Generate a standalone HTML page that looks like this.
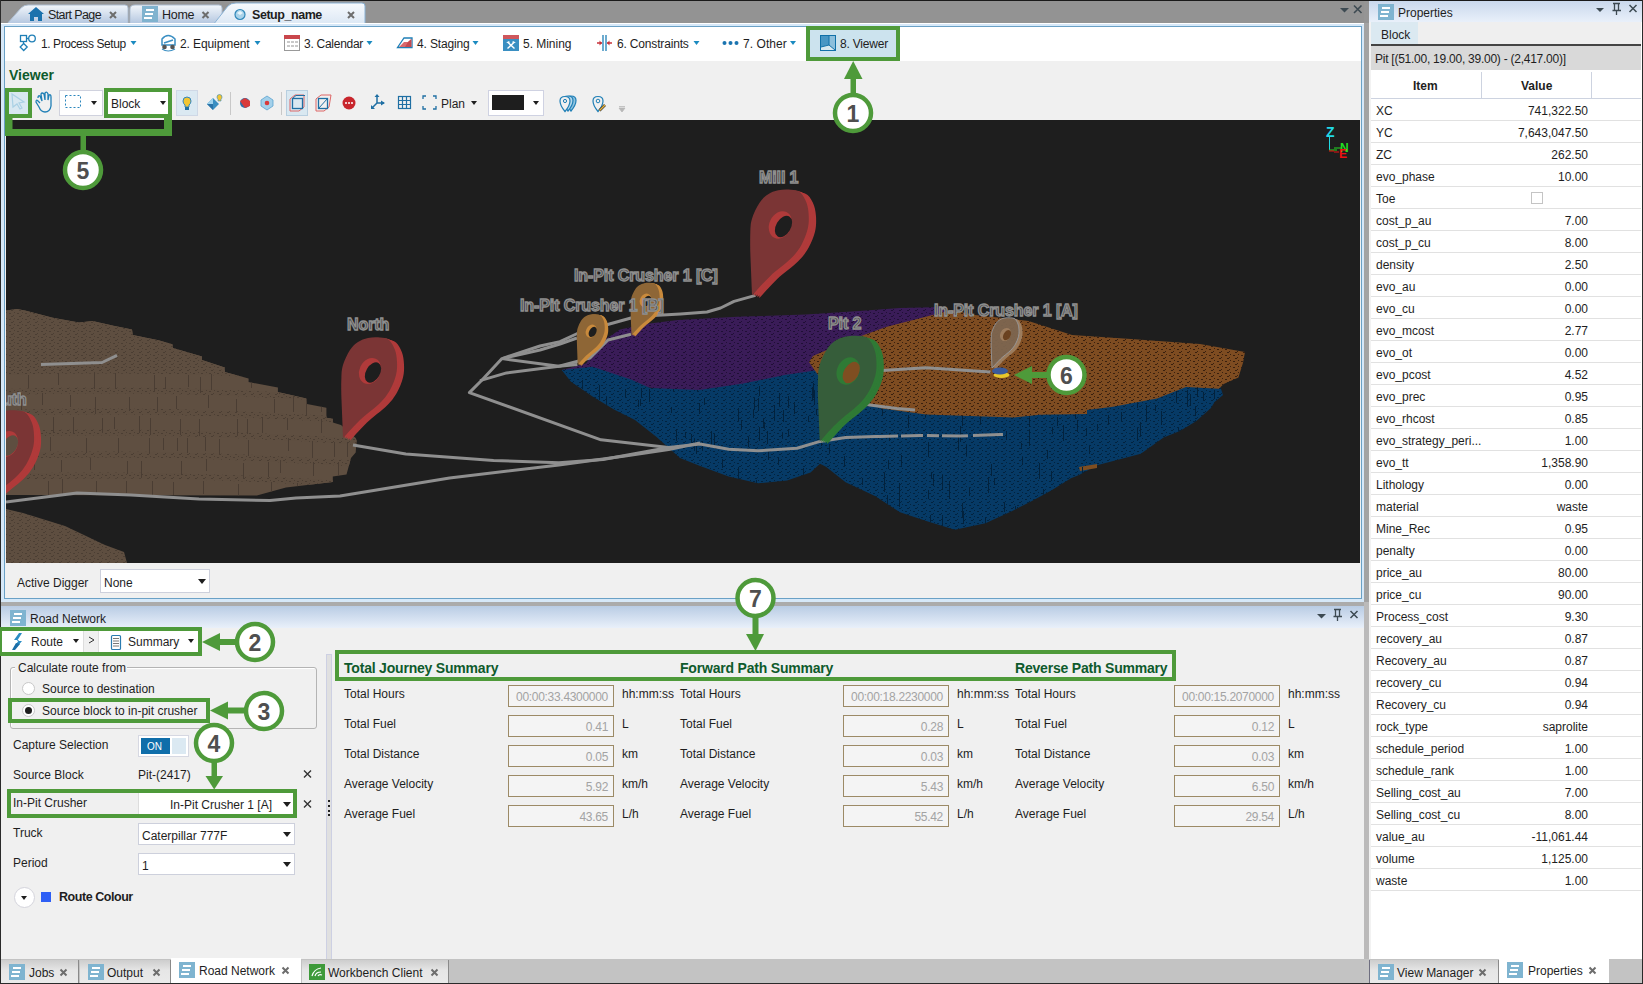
<!DOCTYPE html>
<html><head><meta charset="utf-8">
<style>
*{box-sizing:border-box}
html,body{margin:0;padding:0}
body{width:1643px;height:984px;position:relative;overflow:hidden;background:#f0f0f0;font-family:"Liberation Sans",sans-serif;font-size:12px;color:#1e1e1e}
.a{position:absolute}
.t{position:absolute;white-space:nowrap;line-height:16px}
.combo{position:absolute;background:#fff;border:1px solid #cdd0dc}
.arr{position:absolute;width:0;height:0;border-left:4px solid transparent;border-right:4px solid transparent;border-top:5px solid #1e1e1e}
.sarr{position:absolute;width:0;height:0;border-left:4px solid transparent;border-right:4px solid transparent;border-top:4px solid #1b8ac0}
.gb{position:absolute;border:4px solid #4e9a3a}
.docico{position:absolute;background:#7fb4d0;width:16px;height:16px}
.docico:before{content:"";position:absolute;left:4px;top:3px;width:8px;height:2px;background:#fff;box-shadow:-1px 4px 0 #fff,-2px 8px 0 #fff}
.xx{position:absolute;color:#6a6a6a;font-size:12px;font-weight:700;line-height:12px}
.prow{position:absolute;left:1371px;width:270px;height:22px;border-bottom:1px solid #e3e3e3}
.prow span{position:absolute;top:4px;white-space:nowrap}
.prow .k{left:5px}
.prow .v{right:54px}
.tb{position:absolute;width:106px;height:22px;background:#f4f4f4;border:1px solid #9c8a66;color:#a3a3a3;text-align:right;padding-right:5px;line-height:22px;font-size:12px;letter-spacing:-0.3px}
</style></head><body>

<!-- window frame -->
<div class="a" style="left:0;top:0;width:1643px;height:1px;background:#1a1a1a"></div>
<div class="a" style="left:0;top:1px;width:1369px;height:22px;background:#939393"></div>
<div class="a" style="left:0;top:0;width:1px;height:984px;background:#2a2a2a"></div>

<!-- doc tabs -->
<svg class="a" style="left:0;top:0" width="400" height="27">
<defs>
<linearGradient id="tabg" x1="0" y1="0" x2="0" y2="1"><stop offset="0" stop-color="#f2f6fb"/><stop offset="1" stop-color="#b3c6df"/></linearGradient>
<linearGradient id="tabga" x1="0" y1="0" x2="0" y2="1"><stop offset="0" stop-color="#f7fafd"/><stop offset="1" stop-color="#dbe7f4"/></linearGradient>
</defs>
<path d="M7,24 L21,8 Q24,5 28,5 L125,5 Q128,5 128,8 L128,24 Z" fill="url(#tabg)" stroke="#aebfd3" stroke-width="1"/>
<path d="M130,24 L130,9 Q130,5 135,5 L219,5 Q222,5 222,8 L222,24 Z" fill="url(#tabg)" stroke="#aebfd3" stroke-width="1"/>
<path d="M213,25 L228,6 Q231,3 236,3 L362,3 Q365,3 365,6 L365,25 Z" fill="url(#tabga)" stroke="#8bb3d6" stroke-width="1"/>
<!-- house -->
<path d="M28,14 L36,7 L44,14 L42,14 L42,21 L38,21 L38,17 L34,17 L34,21 L30,21 L30,14 Z" fill="#1b72ad"/>
<!-- home doc icon -->
<rect x="142" y="6" width="16" height="16" fill="#80b3cf"/>
<rect x="146" y="9" width="8" height="2" fill="#fff"/><rect x="145" y="13" width="8" height="2" fill="#fff"/><rect x="144" y="17" width="8" height="2" fill="#fff"/>
<!-- setup icon -->
<circle cx="240" cy="14.5" r="5" fill="#a9d3ea" stroke="#2f87b9" stroke-width="1.2"/>
<path d="M237,13 L240,11 L243,13 L240,15 Z" fill="#e8f5fb"/>
<!-- close x -->
<g stroke="#6d6d6d" stroke-width="2">
<path d="M110,12 L116,18 M116,12 L110,18"/>
<path d="M202.5,12 L208.5,18 M208.5,12 L202.5,18"/>
<path d="M348,12 L354,18 M354,12 L348,18"/>
</g>
</svg>
<div class="t" style="left:48px;top:7px;font-size:12.5px;letter-spacing:-0.6px">Start Page</div>
<div class="t" style="left:162px;top:7px;font-size:12.5px;letter-spacing:-0.3px">Home</div>
<div class="t" style="left:252px;top:7px;font-size:12.5px;font-weight:700;letter-spacing:-0.45px">Setup_name</div>
<!-- doc top-right icons -->
<svg class="a" style="left:1336px;top:4px" width="30" height="12">
<path d="M4,4 L13,4 L8.5,8.5 Z" fill="#3d4a52"/>
<path d="M18,1.5 L25.5,9 M25.5,1.5 L18,9" stroke="#3d4a52" stroke-width="1.6"/>
</svg>

<!-- doc area frame -->
<div class="a" style="left:1px;top:23px;width:1363px;height:579px;background:#d6e8f8;border-top:1px solid #fff"></div>
<div class="a" style="left:4px;top:26px;width:1358px;height:573px;border:1px solid #6aa1c6;background:#f0f0f0"></div>
<!-- ribbon -->
<div class="a" style="left:5px;top:27px;width:1356px;height:34px;background:#fff"></div>

<!-- ribbon items -->
<svg class="a" style="left:0;top:27px;overflow:visible" width="1000" height="34">
<g fill="none" stroke="#1f7fb6" stroke-width="1.3">
<rect x="20.5" y="8.5" width="6" height="6"/><circle cx="32" cy="11.5" r="3.3"/><path d="M26.5,11.5 L28.7,11.5 M23.5,14.5 L23.5,16.5 M23.7,16.5 L27.2,20 L23.7,23.5 L20.2,20 Z"/>
</g>
<!-- equipment -->
<g>
<path d="M162,12 Q168,5 175,12 L175,18 L162,18 Z" fill="none" stroke="#3b8fc3" stroke-width="1.5"/>
<path d="M164,16 L173,13" stroke="#3b8fc3" stroke-width="1.5"/>
<circle cx="164.5" cy="20" r="2.3" fill="#555"/><circle cx="172.5" cy="20" r="2.3" fill="#555"/>
<path d="M162,22 Q168,26 175,22" fill="none" stroke="#3b8fc3" stroke-width="1.2"/>
</g>
<!-- calendar -->
<rect x="284.5" y="8.5" width="15" height="15" fill="#fff" stroke="#999" stroke-width="1"/>
<rect x="284" y="8" width="16" height="4" fill="#c9464c"/>
<g fill="#c9c9c9"><rect x="287" y="14" width="3" height="2"/><rect x="291" y="14" width="3" height="2"/><rect x="295" y="14" width="3" height="2"/><rect x="287" y="18" width="3" height="2"/><rect x="291" y="18" width="3" height="2"/><rect x="295" y="18" width="3" height="2"/></g>
<!-- staging -->
<path d="M397.5,20.5 L404,11 L412,11 L412,20.5 Z" fill="#fff" stroke="#1f7fb6" stroke-width="1.3"/>
<path d="M399,20 L404,15 L408,15 L411.3,12 L411.3,20 Z" fill="#d9686d"/><path d="M405,20 L408,15 L411.3,12 L411.3,20 Z" fill="#c44a50"/>
<!-- mining -->
<rect x="503" y="8" width="16" height="16" fill="#3a8fc2"/><rect x="503" y="8" width="16" height="4" fill="#cf575c"/>
<path d="M507.5,21.5 L514.5,15 M514.5,21.5 L507.5,15" stroke="#fff" stroke-width="1.4"/><path d="M506,16 L509,14 L510,15.5 Z M516,16 L513,14 L512,15.5 Z" fill="#fff"/>
<!-- constraints -->
<path d="M603,8 L603,24 M606,8 L606,24" stroke="#1f7fb6" stroke-width="1.3"/>
<path d="M597,16 L602,16 M607,16 L612,16" stroke="#c8323a" stroke-width="1.3"/>
<path d="M599.5,13.5 L602,16 L599.5,18.5 Z M609.5,13.5 L607,16 L609.5,18.5 Z" fill="#c8323a"/>
<!-- other dots -->
<circle cx="724.5" cy="16" r="2" fill="#1a74b0"/><circle cx="730.5" cy="16" r="2" fill="#1a74b0"/><circle cx="736.5" cy="16" r="2" fill="#1a74b0"/>
<!-- dropdown arrows -->
<g fill="#1b8ac0">
<path d="M130.5,14 L136.5,14 L133.5,18 Z"/><path d="M254.5,14 L260.5,14 L257.5,18 Z"/><path d="M366.5,14 L372.5,14 L369.5,18 Z"/>
<path d="M472.5,14 L478.5,14 L475.5,18 Z"/><path d="M693.5,14 L699.5,14 L696.5,18 Z"/><path d="M790,14 L796,14 L793,18 Z"/>
</g>
<!-- viewer box -->
<rect x="806" y="-1" width="94" height="35" fill="#4e9a3a"/>
<rect x="810" y="3" width="86" height="27" fill="#cce3ee"/>
<path d="M821,9 L829,9 L829,18 L821,20 Z" fill="#4896c4"/><path d="M829,9 L835,9 L835,23 L829,18 Z" fill="#8cbfdc"/><path d="M821,20 L829,18 L835,23 L821,23 Z" fill="#d8e8f0"/>
<rect x="820.5" y="8.5" width="15" height="15" fill="none" stroke="#1070a8" stroke-width="1"/>
<path d="M829,9 L829,18 L821,20 M829,18 L835,23" stroke="#1070a8" stroke-width="1" fill="none"/>
</svg>
<div class="t" style="left:41px;top:36px;letter-spacing:-0.42px">1. Process Setup</div>
<div class="t" style="left:180px;top:36px;letter-spacing:-0.1px">2. Equipment</div>
<div class="t" style="left:304px;top:36px;letter-spacing:-0.27px">3. Calendar</div>
<div class="t" style="left:417px;top:36px;letter-spacing:-0.15px">4. Staging</div>
<div class="t" style="left:523px;top:36px;letter-spacing:-0.03px">5. Mining</div>
<div class="t" style="left:617px;top:36px;letter-spacing:-0.17px">6. Constraints</div>
<div class="t" style="left:743px;top:36px;letter-spacing:0.07px">7. Other</div>
<div class="t" style="left:840px;top:36px;letter-spacing:-0.2px">8. Viewer</div>

<!-- viewer toolbar -->
<div class="t" style="left:9px;top:67px;font-size:14px;font-weight:700;color:#0e5a2c;line-height:16px">Viewer</div>
<svg class="a" style="left:0;top:85px" width="640" height="36">
<!-- pointer green box -->
<rect x="5" y="3" width="27" height="30" fill="#4e9a3a"/>
<rect x="9" y="7" width="19" height="22" fill="#d8e8f1"/>
<path d="M12,9 L24,17 L19,18 L22,23 L20,24 L17,19 L13,22 Z" fill="none" stroke="#a9d0e4" stroke-width="1.2"/>
<!-- hand -->
<path d="M38,13 Q38,10 40,11 L42,16 L41,9 Q42,7 44,9 L45,15 L45,8 Q47,6 48,9 L48,15 L49,10 Q51,9 51,12 L51,21 Q50,27 45,27 Q41,27 39,22 L36,17 Q36,14 38,16 L40,18" fill="none" stroke="#1f7fb6" stroke-width="1.3"/>
<!-- select dropdown -->
<rect x="59.5" y="5.5" width="43" height="25" fill="#fff" stroke="#d0d2de"/>
<rect x="65.5" y="10.5" width="15" height="12" fill="none" stroke="#2a86bd" stroke-dasharray="2,2"/>
<path d="M91,16 L97,16 L94,20 Z" fill="#1e1e1e"/>
<!-- block box -->
<rect x="104" y="3" width="68" height="30" fill="#4e9a3a"/>
<rect x="108" y="7" width="60" height="22" fill="#fff"/>
<path d="M160,16 L166,16 L163,20 Z" fill="#1e1e1e"/>
<!-- bulb -->
<rect x="176.5" y="5.5" width="21" height="25" fill="#dbe9f2" stroke="#cfd8e6"/>
<path d="M187,12 Q191,12 191,16 Q191,18.5 189,20 L189,22 L185,22 L185,20 Q183,18.5 183,16 Q183,12 187,12 Z" fill="#f3c531" stroke="#2f86bf" stroke-width="1"/>
<rect x="185" y="22" width="4" height="3" fill="#1f6fa3"/>
<!-- diamond -->
<path d="M207,19 L213,13 L219,19 L213,25 Z" fill="#3a8fc2"/><path d="M207,19 L213,13 L213,19 Z" fill="#9fd3ee"/><path d="M207,19 L213,19 L213,25 Z" fill="#2a73a8"/>
<path d="M219.5,9.5 Q222,9.5 222,12 Q222,13.5 221,14.2 L221,16 L218,16 L218,14.2 Q217,13.5 217,12 Q217,9.5 219.5,9.5 Z" fill="#f3c531" stroke="#2f86bf" stroke-width="0.6"/>
<path d="M230.5,7 L230.5,30" stroke="#c8c8c8"/>
<!-- cubes -->
<circle cx="245" cy="18" r="5" fill="#2f6fa8"/><path d="M240,16 L245,13 L250,16 L250,21 L245,23 Z" fill="#d93a3a"/>
<path d="M261,15 L267,11 L273,15 L273,21 L267,25 L261,21 Z" fill="#a3d0ea" stroke="#5aa3cf" stroke-width="0.8"/><circle cx="267" cy="18" r="2.3" fill="#d93a3a"/>
<path d="M281.5,7 L281.5,30" stroke="#c8c8c8"/>
<rect x="286.5" y="5.5" width="21" height="25" fill="#d9e8f1" stroke="#b8cfe0"/>
<path d="M290,14 L295,10 L304,10 L304,22 L299,26 L290,26 Z" fill="none" stroke="#d66" stroke-width="1"/>
<rect x="292.5" y="13.5" width="10" height="10" fill="none" stroke="#1f6fa3" stroke-width="1.3"/><path d="M292.5,13.5 L296,10.5 L305,10.5" fill="none" stroke="#1f6fa3" stroke-width="1"/>
<path d="M316,14 L321,10 L331,10 L329,22 L324,26 L316,26 Z" fill="none" stroke="#d66" stroke-width="1"/>
<rect x="318.5" y="13.5" width="9" height="10" fill="none" stroke="#1f6fa3" stroke-width="1.3"/><path d="M318.5,23.5 L327.5,13.5" stroke="#1f6fa3"/>
<!-- stop -->
<circle cx="349" cy="18" r="6.5" fill="#c8262d"/><circle cx="346" cy="18" r="1" fill="#fff"/><circle cx="349" cy="18" r="1" fill="#fff"/><circle cx="352" cy="18" r="1" fill="#fff"/>
<!-- axes -->
<path d="M377,18 L377,11 M377,18 L372,23 M377,18 L384,18" stroke="#1f6fa3" stroke-width="1.5" fill="none"/>
<path d="M374.5,12 L377,9 L379.5,12 Z M381,15.5 L385,18 L381,20.5 Z M371,20 L371,24 L375,24 Z" fill="#1f6fa3"/>
<!-- grid -->
<rect x="398.5" y="11.5" width="12" height="12" fill="none" stroke="#1f6fa3" stroke-width="1.2"/>
<path d="M402.5,11.5 L402.5,23.5 M406.5,11.5 L406.5,23.5 M398.5,15.5 L410.5,15.5 M398.5,19.5 L410.5,19.5" stroke="#1f6fa3" stroke-width="1.2"/>
<!-- corners -->
<path d="M423,14 L423,11 L426,11 M433,11 L436,11 L436,14 M436,21 L436,24 L433,24 M426,24 L423,24 L423,21" fill="none" stroke="#1f6fa3" stroke-width="1.3"/>
<path d="M471,16 L477,16 L474,20 Z" fill="#1e1e1e"/>
<!-- color combo -->
<rect x="488.5" y="5.5" width="55" height="25" fill="#fff" stroke="#cfd2e2"/>
<rect x="492" y="10" width="32" height="15" fill="#1e1e1e"/>
<path d="M533,16 L539,16 L536,20 Z" fill="#1e1e1e"/>
<!-- pins -->
<g stroke="#1f7fb6" stroke-width="1.2">
<path d="M571,26 Q566,20 566,15.5 Q566,11 571,11 Q576,11 576,15.5 Q576,20 571,26 Z" fill="#8ec3e0"/>
<path d="M568,26 Q563,20 563,15.5 Q563,11 568,11 Q573,11 573,15.5 Q573,20 568,26 Z" fill="#b5d9ec"/>
<path d="M565,26.5 Q560,20.5 560,16 Q560,11.5 565,11.5 Q570,11.5 570,16 Q570,20.5 565,26.5 Z" fill="#f0f0f0"/>
<path d="M598,26.5 Q593,20.5 593,16 Q593,11.5 598,11.5 Q603,11.5 603,16 Q603,20.5 598,26.5 Z" fill="#f0f0f0"/>
</g>
<circle cx="565" cy="16" r="1.6" fill="none" stroke="#1f7fb6" stroke-width="1"/><circle cx="598" cy="16" r="1.8" fill="none" stroke="#1f7fb6" stroke-width="1"/>
<path d="M599.5,25.5 L605,20" stroke="#333" stroke-width="2.6"/><path d="M599.5,25.5 L605,20" stroke="#e8b33a" stroke-width="1.4"/>
<path d="M619,23 L625,23 L622,27 Z M619,21.5 L625,21.5" fill="#b8b8b8" stroke="#b8b8b8" stroke-width="0.8"/>
</svg>
<div class="t" style="left:111px;top:96px">Block</div>
<div class="t" style="left:441px;top:96px">Plan</div>

<!-- active digger row -->
<div class="t" style="left:17px;top:575px">Active Digger</div>
<div class="combo" style="left:100px;top:569px;width:110px;height:24px"></div>
<div class="t" style="left:104px;top:575px">None</div>
<div class="arr" style="left:198px;top:579px"></div>

<!-- splitter -->
<div class="a" style="left:1px;top:602px;width:1363px;height:4px;background:#ababab"></div>
<div class="a" style="left:1364px;top:1px;width:5px;height:982px;background:linear-gradient(#959595 0,#959595 22px,#a3a3a3 22px,#a3a3a3 601px,#bbbaba 601px,#bbbaba 958px,#c4c4c4 958px)"></div>

<!-- road network header -->
<div class="a" style="left:1px;top:606px;width:1363px;height:22px;background:linear-gradient(#b9cce4,#e9f0fa)"></div>
<div class="docico" style="left:10px;top:610px"></div>
<div class="t" style="left:30px;top:611px">Road Network</div>
<svg class="a" style="left:1310px;top:606px" width="54" height="22">
<path d="M7,8 L16,8 L11.5,12.5 Z" fill="#3d4a52"/>
<path d="M24,3.5 L31,3.5 M25.5,4 L25.5,10 M29.5,4 L29.5,10 M23.5,10.5 L32,10.5 M27.5,11 L27.5,15" stroke="#3d4a52" stroke-width="1.3" fill="none"/>
<path d="M40.5,5 L47.5,12 M47.5,5 L40.5,12" stroke="#3d4a52" stroke-width="1.5"/>
</svg>

<!-- road network toolbar -->
<div class="a" style="left:-2px;top:627px;width:204px;height:29px;background:#4e9a3a"></div>
<div class="a" style="left:2px;top:631px;width:81px;height:21px;background:#fff"></div>
<div class="a" style="left:83px;top:631px;width:16px;height:21px;background:#f0f0f0;border-left:1px solid #ddd;border-right:1px solid #ddd"></div>
<div class="a" style="left:99px;top:631px;width:99px;height:21px;background:#fff"></div>
<svg class="a" style="left:0;top:627px" width="202" height="29">
<path d="M19,6 L14,13 L19,13 L14,20 L17,20 L22,14 L17,14 L22,6 Z" fill="#2a8cc4"/><path d="M16,16 L12,23 L15,23 L20,17 Z" fill="#1a6ea8"/>
<path d="M73,12 L79,12 L76,16 Z M188,12 L194,12 L191,16 Z" fill="#1e1e1e"/>
<path d="M89,10 L94,13 L89,16" stroke="#333" stroke-width="1" fill="none"/>
<rect x="111.5" y="8.5" width="9" height="14" rx="1" fill="#fff" stroke="#2a7bb0" stroke-width="1.2"/>
<path d="M113,11.5 L119,11.5 M113,14 L119,14 M113,16.5 L119,16.5 M113,19 L119,19" stroke="#555" stroke-width="0.8"/>
</svg>
<div class="t" style="left:31px;top:634px">Route</div>
<div class="t" style="left:128px;top:634px">Summary</div>

<!-- calculate route group -->
<div class="a" style="left:10px;top:667px;width:307px;height:62px;border:1px solid #b4b4b4;border-radius:3px;box-shadow:inset 1px 1px 0 #fff"></div>
<div class="a" style="left:15px;top:661px;width:112px;height:12px;background:#f0f0f0"></div>
<div class="t" style="left:18px;top:660px">Calculate route from</div>
<div class="a" style="left:22px;top:682px;width:13px;height:13px;border:1px solid #c8c8c8;border-radius:50%;background:#fff"></div>
<div class="t" style="left:42px;top:681px">Source to destination</div>
<div class="gb" style="left:8px;top:698px;width:202px;height:25px"></div>
<div class="a" style="left:22px;top:704px;width:13px;height:13px;border:1px solid #c8c8c8;border-radius:50%;background:#fff"></div>
<div class="a" style="left:25px;top:707px;width:7px;height:7px;border-radius:50%;background:#1e1e1e"></div>
<div class="t" style="left:42px;top:703px">Source block to in-pit crusher</div>

<!-- form rows -->
<div class="t" style="left:13px;top:737px">Capture Selection</div>
<div class="a" style="left:138px;top:735px;width:51px;height:22px;border:1px solid #d6d8e2;background:#fff"></div>
<div class="a" style="left:141px;top:738px;width:29px;height:16px;background:#0f6eaa"></div>
<div class="a" style="left:172px;top:738px;width:14px;height:16px;background:#dbe9f2"></div>
<div class="t" style="left:147px;top:739px;font-size:10px;color:#fff">ON</div>
<div class="t" style="left:13px;top:767px">Source Block</div>
<div class="t" style="left:138px;top:767px">Pit-(2417)</div>
<svg class="a" style="left:300px;top:766px" width="16" height="50">
<path d="M4,4.5 L11,11.5 M11,4.5 L4,11.5" stroke="#333" stroke-width="1.4"/>
<path d="M4,34.5 L11,41.5 M11,34.5 L4,41.5" stroke="#333" stroke-width="1.4"/>
</svg>
<div class="gb" style="left:7px;top:789px;width:290px;height:29px"></div>
<div class="t" style="left:13px;top:795px">In-Pit Crusher</div>
<div class="a" style="left:138px;top:793px;width:155px;height:21px;background:#fff;border-left:1px solid #ddd"></div>
<div class="t" style="left:170px;top:797px">In-Pit Crusher 1 [A]</div>
<div class="arr" style="left:283px;top:802px"></div>
<div class="t" style="left:13px;top:825px">Truck</div>
<div class="combo" style="left:138px;top:823px;width:157px;height:22px"></div>
<div class="t" style="left:142px;top:828px">Caterpillar 777F</div>
<div class="arr" style="left:283px;top:832px"></div>
<div class="t" style="left:13px;top:855px">Period</div>
<div class="combo" style="left:138px;top:853px;width:157px;height:22px"></div>
<div class="t" style="left:142px;top:858px">1</div>
<div class="arr" style="left:283px;top:862px"></div>
<div class="a" style="left:14px;top:887px;width:21px;height:21px;border:1px solid #d4d4dc;border-radius:50%;background:#fff"></div>
<div class="a" style="left:21px;top:896px;width:0;height:0;border-left:3.5px solid transparent;border-right:3.5px solid transparent;border-top:4px solid #1e1e1e"></div>
<div class="a" style="left:41px;top:892px;width:10px;height:10px;background:#2e5ff5"></div>
<div class="t" style="left:59px;top:889px;font-size:12.5px;font-weight:700;letter-spacing:-0.45px">Route Colour</div>

<!-- panel splitter -->
<div class="a" style="left:326px;top:654px;width:6px;height:306px;background:#e0e0e0;border:1px solid #cdd0e3;border-bottom:none"></div>
<svg class="a" style="left:327px;top:799px" width="4" height="18"><rect x="1" y="1" width="2" height="2" fill="#222"/><rect x="1" y="6" width="2" height="2" fill="#222"/><rect x="1" y="11" width="2" height="2" fill="#222"/><rect x="1" y="15" width="2" height="2" fill="#222"/></svg>

<!-- summary -->
<div class="gb" style="left:335px;top:650px;width:841px;height:31px"></div>
<div class="t" style="left:344px;top:660px;font-size:14px;font-weight:700;color:#0e5a2c;line-height:16px;letter-spacing:-0.2px">Total Journey Summary</div>
<div class="t" style="left:680px;top:660px;font-size:14px;font-weight:700;color:#0e5a2c;line-height:16px;letter-spacing:-0.2px">Forward Path Summary</div>
<div class="t" style="left:1015px;top:660px;font-size:14px;font-weight:700;color:#0e5a2c;line-height:16px;letter-spacing:-0.2px">Reverse Path Summary</div>
<div class="t" style="left:344px;top:686px">Total Hours</div>
<div class="tb" style="left:508px;top:685px;width:106px">00:00:33.4300000</div>
<div class="t" style="left:622px;top:686px">hh:mm:ss</div>
<div class="t" style="left:344px;top:716px">Total Fuel</div>
<div class="tb" style="left:508px;top:715px;width:106px">0.41</div>
<div class="t" style="left:622px;top:716px">L</div>
<div class="t" style="left:344px;top:746px">Total Distance</div>
<div class="tb" style="left:508px;top:745px;width:106px">0.05</div>
<div class="t" style="left:622px;top:746px">km</div>
<div class="t" style="left:344px;top:776px">Average Velocity</div>
<div class="tb" style="left:508px;top:775px;width:106px">5.92</div>
<div class="t" style="left:622px;top:776px">km/h</div>
<div class="t" style="left:344px;top:806px">Average Fuel</div>
<div class="tb" style="left:508px;top:805px;width:106px">43.65</div>
<div class="t" style="left:622px;top:806px">L/h</div>
<div class="t" style="left:680px;top:686px">Total Hours</div>
<div class="tb" style="left:843px;top:685px;width:106px">00:00:18.2230000</div>
<div class="t" style="left:957px;top:686px">hh:mm:ss</div>
<div class="t" style="left:680px;top:716px">Total Fuel</div>
<div class="tb" style="left:843px;top:715px;width:106px">0.28</div>
<div class="t" style="left:957px;top:716px">L</div>
<div class="t" style="left:680px;top:746px">Total Distance</div>
<div class="tb" style="left:843px;top:745px;width:106px">0.03</div>
<div class="t" style="left:957px;top:746px">km</div>
<div class="t" style="left:680px;top:776px">Average Velocity</div>
<div class="tb" style="left:843px;top:775px;width:106px">5.43</div>
<div class="t" style="left:957px;top:776px">km/h</div>
<div class="t" style="left:680px;top:806px">Average Fuel</div>
<div class="tb" style="left:843px;top:805px;width:106px">55.42</div>
<div class="t" style="left:957px;top:806px">L/h</div>
<div class="t" style="left:1015px;top:686px">Total Hours</div>
<div class="tb" style="left:1174px;top:685px;width:106px">00:00:15.2070000</div>
<div class="t" style="left:1288px;top:686px">hh:mm:ss</div>
<div class="t" style="left:1015px;top:716px">Total Fuel</div>
<div class="tb" style="left:1174px;top:715px;width:106px">0.12</div>
<div class="t" style="left:1288px;top:716px">L</div>
<div class="t" style="left:1015px;top:746px">Total Distance</div>
<div class="tb" style="left:1174px;top:745px;width:106px">0.03</div>
<div class="t" style="left:1288px;top:746px">km</div>
<div class="t" style="left:1015px;top:776px">Average Velocity</div>
<div class="tb" style="left:1174px;top:775px;width:106px">6.50</div>
<div class="t" style="left:1288px;top:776px">km/h</div>
<div class="t" style="left:1015px;top:806px">Average Fuel</div>
<div class="tb" style="left:1174px;top:805px;width:106px">29.54</div>
<div class="t" style="left:1288px;top:806px">L/h</div>

<!-- properties panel -->
<div class="a" style="left:1369px;top:1px;width:273px;height:958px;background:#fff;border-left:2px solid #f2f2f2"></div>
<div class="a" style="left:1369px;top:1px;width:273px;height:21px;background:linear-gradient(#c9d8ec,#e9f0fa)"></div>
<div class="docico" style="left:1378px;top:4px"></div>
<div class="t" style="left:1398px;top:5px">Properties</div>
<svg class="a" style="left:1590px;top:1px" width="52" height="20">
<path d="M6,7 L14,7 L10,11 Z" fill="#3d4a52"/>
<path d="M23,2.5 L30,2.5 M24.5,3 L24.5,9 M28.5,3 L28.5,9 M22.5,9.5 L31,9.5 M26.5,10 L26.5,14" stroke="#3d4a52" stroke-width="1.3" fill="none"/>
<path d="M39.5,4 L46.5,11 M46.5,4 L39.5,11" stroke="#3d4a52" stroke-width="1.5"/>
</svg>
<div class="a" style="left:1371px;top:22px;width:270px;height:22px;background:#efefef"></div>
<div class="a" style="left:1371px;top:22px;width:47px;height:22px;background:#dbe9f1"></div>
<div class="t" style="left:1381px;top:27px">Block</div>
<div class="a" style="left:1371px;top:44px;width:270px;height:2px;background:#444"></div>
<div class="a" style="left:1371px;top:46px;width:270px;height:24px;background:#d9d9d9"></div>
<div class="t" style="left:1375px;top:51px;letter-spacing:-0.25px">Pit [(51.00, 19.00, 39.00) - (2,417.00)]</div>
<div class="a" style="left:1371px;top:70px;width:270px;height:29px;border-bottom:1px solid #cdd3e0"></div>
<div class="a" style="left:1481px;top:72px;width:1px;height:26px;background:#cdd3e0"></div>
<div class="a" style="left:1591px;top:72px;width:1px;height:26px;background:#cdd3e0"></div>
<div class="t" style="left:1413px;top:78px;font-weight:700">Item</div>
<div class="t" style="left:1521px;top:78px;font-weight:700">Value</div>
<div class="a" style="left:1371px;top:120px;width:270px;height:1px;background:#e1e1e1"></div>
<div class="t" style="left:1376px;top:103px">XC</div>
<div class="t" style="left:1440px;width:148px;text-align:right;top:103px">741,322.50</div>
<div class="a" style="left:1371px;top:142px;width:270px;height:1px;background:#e1e1e1"></div>
<div class="t" style="left:1376px;top:125px">YC</div>
<div class="t" style="left:1440px;width:148px;text-align:right;top:125px">7,643,047.50</div>
<div class="a" style="left:1371px;top:164px;width:270px;height:1px;background:#e1e1e1"></div>
<div class="t" style="left:1376px;top:147px">ZC</div>
<div class="t" style="left:1440px;width:148px;text-align:right;top:147px">262.50</div>
<div class="a" style="left:1371px;top:186px;width:270px;height:1px;background:#e1e1e1"></div>
<div class="t" style="left:1376px;top:169px">evo_phase</div>
<div class="t" style="left:1440px;width:148px;text-align:right;top:169px">10.00</div>
<div class="a" style="left:1371px;top:208px;width:270px;height:1px;background:#e1e1e1"></div>
<div class="t" style="left:1376px;top:191px">Toe</div>
<div class="a" style="left:1531px;top:192px;width:12px;height:12px;border:1px solid #c4c4c4;background:#fff"></div>
<div class="a" style="left:1371px;top:230px;width:270px;height:1px;background:#e1e1e1"></div>
<div class="t" style="left:1376px;top:213px">cost_p_au</div>
<div class="t" style="left:1440px;width:148px;text-align:right;top:213px">7.00</div>
<div class="a" style="left:1371px;top:252px;width:270px;height:1px;background:#e1e1e1"></div>
<div class="t" style="left:1376px;top:235px">cost_p_cu</div>
<div class="t" style="left:1440px;width:148px;text-align:right;top:235px">8.00</div>
<div class="a" style="left:1371px;top:274px;width:270px;height:1px;background:#e1e1e1"></div>
<div class="t" style="left:1376px;top:257px">density</div>
<div class="t" style="left:1440px;width:148px;text-align:right;top:257px">2.50</div>
<div class="a" style="left:1371px;top:296px;width:270px;height:1px;background:#e1e1e1"></div>
<div class="t" style="left:1376px;top:279px">evo_au</div>
<div class="t" style="left:1440px;width:148px;text-align:right;top:279px">0.00</div>
<div class="a" style="left:1371px;top:318px;width:270px;height:1px;background:#e1e1e1"></div>
<div class="t" style="left:1376px;top:301px">evo_cu</div>
<div class="t" style="left:1440px;width:148px;text-align:right;top:301px">0.00</div>
<div class="a" style="left:1371px;top:340px;width:270px;height:1px;background:#e1e1e1"></div>
<div class="t" style="left:1376px;top:323px">evo_mcost</div>
<div class="t" style="left:1440px;width:148px;text-align:right;top:323px">2.77</div>
<div class="a" style="left:1371px;top:362px;width:270px;height:1px;background:#e1e1e1"></div>
<div class="t" style="left:1376px;top:345px">evo_ot</div>
<div class="t" style="left:1440px;width:148px;text-align:right;top:345px">0.00</div>
<div class="a" style="left:1371px;top:384px;width:270px;height:1px;background:#e1e1e1"></div>
<div class="t" style="left:1376px;top:367px">evo_pcost</div>
<div class="t" style="left:1440px;width:148px;text-align:right;top:367px">4.52</div>
<div class="a" style="left:1371px;top:406px;width:270px;height:1px;background:#e1e1e1"></div>
<div class="t" style="left:1376px;top:389px">evo_prec</div>
<div class="t" style="left:1440px;width:148px;text-align:right;top:389px">0.95</div>
<div class="a" style="left:1371px;top:428px;width:270px;height:1px;background:#e1e1e1"></div>
<div class="t" style="left:1376px;top:411px">evo_rhcost</div>
<div class="t" style="left:1440px;width:148px;text-align:right;top:411px">0.85</div>
<div class="a" style="left:1371px;top:450px;width:270px;height:1px;background:#e1e1e1"></div>
<div class="t" style="left:1376px;top:433px">evo_strategy_peri...</div>
<div class="t" style="left:1440px;width:148px;text-align:right;top:433px">1.00</div>
<div class="a" style="left:1371px;top:472px;width:270px;height:1px;background:#e1e1e1"></div>
<div class="t" style="left:1376px;top:455px">evo_tt</div>
<div class="t" style="left:1440px;width:148px;text-align:right;top:455px">1,358.90</div>
<div class="a" style="left:1371px;top:494px;width:270px;height:1px;background:#e1e1e1"></div>
<div class="t" style="left:1376px;top:477px">Lithology</div>
<div class="t" style="left:1440px;width:148px;text-align:right;top:477px">0.00</div>
<div class="a" style="left:1371px;top:516px;width:270px;height:1px;background:#e1e1e1"></div>
<div class="t" style="left:1376px;top:499px">material</div>
<div class="t" style="left:1440px;width:148px;text-align:right;top:499px">waste</div>
<div class="a" style="left:1371px;top:538px;width:270px;height:1px;background:#e1e1e1"></div>
<div class="t" style="left:1376px;top:521px">Mine_Rec</div>
<div class="t" style="left:1440px;width:148px;text-align:right;top:521px">0.95</div>
<div class="a" style="left:1371px;top:560px;width:270px;height:1px;background:#e1e1e1"></div>
<div class="t" style="left:1376px;top:543px">penalty</div>
<div class="t" style="left:1440px;width:148px;text-align:right;top:543px">0.00</div>
<div class="a" style="left:1371px;top:582px;width:270px;height:1px;background:#e1e1e1"></div>
<div class="t" style="left:1376px;top:565px">price_au</div>
<div class="t" style="left:1440px;width:148px;text-align:right;top:565px">80.00</div>
<div class="a" style="left:1371px;top:604px;width:270px;height:1px;background:#e1e1e1"></div>
<div class="t" style="left:1376px;top:587px">price_cu</div>
<div class="t" style="left:1440px;width:148px;text-align:right;top:587px">90.00</div>
<div class="a" style="left:1371px;top:626px;width:270px;height:1px;background:#e1e1e1"></div>
<div class="t" style="left:1376px;top:609px">Process_cost</div>
<div class="t" style="left:1440px;width:148px;text-align:right;top:609px">9.30</div>
<div class="a" style="left:1371px;top:648px;width:270px;height:1px;background:#e1e1e1"></div>
<div class="t" style="left:1376px;top:631px">recovery_au</div>
<div class="t" style="left:1440px;width:148px;text-align:right;top:631px">0.87</div>
<div class="a" style="left:1371px;top:670px;width:270px;height:1px;background:#e1e1e1"></div>
<div class="t" style="left:1376px;top:653px">Recovery_au</div>
<div class="t" style="left:1440px;width:148px;text-align:right;top:653px">0.87</div>
<div class="a" style="left:1371px;top:692px;width:270px;height:1px;background:#e1e1e1"></div>
<div class="t" style="left:1376px;top:675px">recovery_cu</div>
<div class="t" style="left:1440px;width:148px;text-align:right;top:675px">0.94</div>
<div class="a" style="left:1371px;top:714px;width:270px;height:1px;background:#e1e1e1"></div>
<div class="t" style="left:1376px;top:697px">Recovery_cu</div>
<div class="t" style="left:1440px;width:148px;text-align:right;top:697px">0.94</div>
<div class="a" style="left:1371px;top:736px;width:270px;height:1px;background:#e1e1e1"></div>
<div class="t" style="left:1376px;top:719px">rock_type</div>
<div class="t" style="left:1440px;width:148px;text-align:right;top:719px">saprolite</div>
<div class="a" style="left:1371px;top:758px;width:270px;height:1px;background:#e1e1e1"></div>
<div class="t" style="left:1376px;top:741px">schedule_period</div>
<div class="t" style="left:1440px;width:148px;text-align:right;top:741px">1.00</div>
<div class="a" style="left:1371px;top:780px;width:270px;height:1px;background:#e1e1e1"></div>
<div class="t" style="left:1376px;top:763px">schedule_rank</div>
<div class="t" style="left:1440px;width:148px;text-align:right;top:763px">1.00</div>
<div class="a" style="left:1371px;top:802px;width:270px;height:1px;background:#e1e1e1"></div>
<div class="t" style="left:1376px;top:785px">Selling_cost_au</div>
<div class="t" style="left:1440px;width:148px;text-align:right;top:785px">7.00</div>
<div class="a" style="left:1371px;top:824px;width:270px;height:1px;background:#e1e1e1"></div>
<div class="t" style="left:1376px;top:807px">Selling_cost_cu</div>
<div class="t" style="left:1440px;width:148px;text-align:right;top:807px">8.00</div>
<div class="a" style="left:1371px;top:846px;width:270px;height:1px;background:#e1e1e1"></div>
<div class="t" style="left:1376px;top:829px">value_au</div>
<div class="t" style="left:1440px;width:148px;text-align:right;top:829px">-11,061.44</div>
<div class="a" style="left:1371px;top:868px;width:270px;height:1px;background:#e1e1e1"></div>
<div class="t" style="left:1376px;top:851px">volume</div>
<div class="t" style="left:1440px;width:148px;text-align:right;top:851px">1,125.00</div>
<div class="a" style="left:1371px;top:890px;width:270px;height:1px;background:#e1e1e1"></div>
<div class="t" style="left:1376px;top:873px">waste</div>
<div class="t" style="left:1440px;width:148px;text-align:right;top:873px">1.00</div>

<!-- bottom tabs -->
<div class="a" style="left:1px;top:959px;width:1363px;height:25px;background:#c3c3c3"></div>
<div class="a" style="left:1369px;top:959px;width:273px;height:25px;background:#c3c3c3"></div>
<div class="a" style="left:0;top:983px;width:1643px;height:1px;background:#2a2a2a"></div>
<div class="a" style="left:1642px;top:0;width:1px;height:984px;background:#2a2a2a"></div>
<div class="a" style="left:1px;top:960px;width:78px;height:23px;background:linear-gradient(#cdcdcd,#e6e6e6 45%,#eaeaea);border-right:1px solid #8a8a8a"></div>
<div class="docico" style="left:9px;top:964px"></div>
<div class="t" style="left:29px;top:965px">Jobs</div>
<svg class="a" style="left:59px;top:968px" width="10" height="10"><path d="M1.5,1.5 L7.5,7.5 M7.5,1.5 L1.5,7.5" stroke="#6d6d6d" stroke-width="2"/></svg>
<div class="a" style="left:80px;top:960px;width:91px;height:23px;background:linear-gradient(#cdcdcd,#e6e6e6 45%,#eaeaea);border-right:1px solid #8a8a8a"></div>
<div class="docico" style="left:88px;top:964px"></div>
<div class="t" style="left:107px;top:965px">Output</div>
<svg class="a" style="left:152px;top:968px" width="10" height="10"><path d="M1.5,1.5 L7.5,7.5 M7.5,1.5 L1.5,7.5" stroke="#6d6d6d" stroke-width="2"/></svg>
<div class="a" style="left:171px;top:958px;width:130px;height:25px;background:#fff"></div>
<div class="docico" style="left:179px;top:962px"></div>
<div class="t" style="left:199px;top:963px">Road Network</div>
<svg class="a" style="left:281px;top:966px" width="10" height="10"><path d="M1.5,1.5 L7.5,7.5 M7.5,1.5 L1.5,7.5" stroke="#6d6d6d" stroke-width="2"/></svg>
<div class="a" style="left:302px;top:960px;width:147px;height:23px;background:linear-gradient(#cdcdcd,#e6e6e6 45%,#eaeaea);border-right:1px solid #8a8a8a"></div>
<div class="a" style="left:309px;top:964px;width:16px;height:16px;background:#3e9a3a"></div>
<svg class="a" style="left:309px;top:964px" width="16" height="16"><path d="M3,12 Q5,5 12,4 M6,12 Q7,8 12,8 M9,12 Q10,10 13,11" stroke="#fff" stroke-width="1.2" fill="none"/></svg>
<div class="t" style="left:328px;top:965px">Workbench Client</div>
<svg class="a" style="left:430px;top:968px" width="10" height="10"><path d="M1.5,1.5 L7.5,7.5 M7.5,1.5 L1.5,7.5" stroke="#6d6d6d" stroke-width="2"/></svg>
<div class="a" style="left:1370px;top:960px;width:129px;height:23px;background:linear-gradient(#cdcdcd,#e6e6e6 45%,#eaeaea);border-right:1px solid #8a8a8a"></div>
<div class="docico" style="left:1378px;top:964px"></div>
<div class="t" style="left:1397px;top:965px">View Manager</div>
<svg class="a" style="left:1478px;top:968px" width="10" height="10"><path d="M1.5,1.5 L7.5,7.5 M7.5,1.5 L1.5,7.5" stroke="#6d6d6d" stroke-width="2"/></svg>
<div class="a" style="left:1499px;top:958px;width:110px;height:25px;background:#fff"></div>
<div class="docico" style="left:1507px;top:962px"></div>
<div class="t" style="left:1528px;top:963px">Properties</div>
<svg class="a" style="left:1588px;top:966px" width="10" height="10"><path d="M1.5,1.5 L7.5,7.5 M7.5,1.5 L1.5,7.5" stroke="#6d6d6d" stroke-width="2"/></svg>
<div class="a" style="left:1369px;top:960px;width:1px;height:23px;background:#6e6e80"></div>

<svg class="a" style="left:0;top:0" width="1643" height="984" viewBox="0 0 1643 984">
<defs><clipPath id="vpc"><rect x="6" y="120" width="1354" height="443"/></clipPath>
<pattern id="pbr" width="8" height="6" patternUnits="userSpaceOnUse"><rect width="8" height="6" fill="#5e4e40"/><rect x="1" y="1" width="2" height="1" fill="#4b3e33"/><rect x="5" y="3" width="1" height="1" fill="#4b3e33"/><rect x="3" y="4" width="2" height="1" fill="#4b3e33"/><rect x="6" y="0" width="1" height="1" fill="#4b3e33"/></pattern>
<pattern id="ppu" width="8" height="6" patternUnits="userSpaceOnUse"><rect width="8" height="6" fill="#3a1c58"/><rect x="1" y="1" width="2" height="1" fill="#200f36"/><rect x="5" y="3" width="1" height="1" fill="#200f36"/><rect x="3" y="4" width="2" height="1" fill="#200f36"/><rect x="6" y="0" width="1" height="1" fill="#200f36"/></pattern>
<pattern id="pbl" width="8" height="6" patternUnits="userSpaceOnUse"><rect width="8" height="6" fill="#063a66"/><rect x="1" y="1" width="2" height="1" fill="#02233f"/><rect x="5" y="3" width="1" height="1" fill="#02233f"/><rect x="3" y="4" width="2" height="1" fill="#02233f"/><rect x="6" y="0" width="1" height="1" fill="#02233f"/></pattern>
<pattern id="por" width="8" height="6" patternUnits="userSpaceOnUse"><rect width="8" height="6" fill="#7e4c21"/><rect x="1" y="1" width="2" height="1" fill="#3a200e"/><rect x="5" y="3" width="1" height="1" fill="#3a200e"/><rect x="3" y="4" width="2" height="1" fill="#3a200e"/><rect x="6" y="0" width="1" height="1" fill="#3a200e"/></pattern>
<pattern id="por2" width="7" height="5" patternUnits="userSpaceOnUse"><rect width="7" height="5" fill="#80501f"/><rect x="1" y="1" width="2" height="1" fill="#3f2410"/><rect x="5" y="3" width="1" height="1" fill="#3f2410"/><rect x="3" y="3" width="1" height="1" fill="#3f2410"/><rect x="6" y="0" width="1" height="1" fill="#3f2410"/><rect x="0" y="4" width="2" height="1" fill="#3f2410"/></pattern>
</defs>
<g clip-path="url(#vpc)">
<rect x="6" y="120" width="1354" height="443" fill="#1e1e1e"/>
<clipPath id="cbr1"><polygon points="6.0,310.5 17.0,309.0 25.0,310.5 52.8,317.7 79.0,322.4 92.5,321.0 113.6,325.7 132.0,329.6 132.8,335.0 158.5,340.2 172.4,344.2 173.0,348.0 202.0,356.5 202.0,360.0 224.8,367.5 224.8,372.0 248.6,378.5 248.6,382.0 277.9,387.6 277.9,392.0 306.3,398.6 307.0,404.0 326.4,407.8 326.4,417.8 332.8,418.7 332.8,422.4 341.0,425.0 355.7,438.0 356.6,440.7 355.7,452.6 351.0,458.0 346.5,474.6 332.8,476.4 332.8,481.9 286.0,487.4 256.9,495.6 6.0,495.0" fill="#000" /></clipPath>
<polygon points="6.0,310.5 17.0,309.0 25.0,310.5 52.8,317.7 79.0,322.4 92.5,321.0 113.6,325.7 132.0,329.6 132.8,335.0 158.5,340.2 172.4,344.2 173.0,348.0 202.0,356.5 202.0,360.0 224.8,367.5 224.8,372.0 248.6,378.5 248.6,382.0 277.9,387.6 277.9,392.0 306.3,398.6 307.0,404.0 326.4,407.8 326.4,417.8 332.8,418.7 332.8,422.4 341.0,425.0 355.7,438.0 356.6,440.7 355.7,452.6 351.0,458.0 346.5,474.6 332.8,476.4 332.8,481.9 286.0,487.4 256.9,495.6 6.0,495.0" fill="#5f4f41" />
<g clip-path="url(#cbr1)">
<rect x="6" y="300" width="360" height="68" fill="url(#pbr)"/>
<path d="M6,369 Q180,364 360,377 L360,383 Q180,370 6,375 Z" fill="url(#pbr)"/>
<path d="M6,389 Q180,384 360,397 L360,403 Q180,390 6,395 Z" fill="url(#pbr)"/>
<path d="M6,410 Q180,405 360,418 L360,424 Q180,411 6,416 Z" fill="url(#pbr)"/>
<path d="M6,431 Q180,426 360,439 L360,445 Q180,432 6,437 Z" fill="url(#pbr)"/>
<path d="M6,453 Q180,448 360,461 L360,467 Q180,454 6,459 Z" fill="url(#pbr)"/>
<path d="M6,474 Q180,469 360,482 L360,488 Q180,475 6,480 Z" fill="url(#pbr)"/>
<path d="M28.5,375 L28.5,388 M58.5,373 L58.5,385 M94.5,373 L94.5,389 M115.5,373 L115.5,389 M154.5,375 L154.5,391 M165.5,377 L165.5,389 M188.5,375 L188.5,387 M200.5,377 L200.5,393 M211.5,374 L211.5,390 M251.5,375 L251.5,388 M279.5,378 L279.5,394 M290.5,375 L290.5,388 M317.5,378 L317.5,391 M340.5,376 L340.5,389 M368.5,377 L368.5,391 M21.5,394 L21.5,410 M42.5,393 L42.5,405 M70.5,395 L70.5,407 M95.5,397 L95.5,414 M129.5,397 L129.5,411 M157.5,397 L157.5,412 M176.5,396 L176.5,409 M208.5,395 L208.5,408 M236.5,399 L236.5,413 M274.5,399 L274.5,413 M293.5,396 L293.5,412 M306.5,399 L306.5,415 M321.5,398 L321.5,412 M360.5,400 L360.5,415 M19.5,414 L19.5,431 M53.5,417 L53.5,433 M73.5,417 L73.5,434 M102.5,418 L102.5,433 M114.5,417 L114.5,429 M139.5,416 L139.5,433 M150.5,418 L150.5,435 M180.5,419 L180.5,435 M199.5,419 L199.5,436 M237.5,419 L237.5,436 M247.5,419 L247.5,434 M262.5,417 L262.5,433 M287.5,418 L287.5,430 M321.5,419 L321.5,433 M354.5,421 L354.5,434 M376.5,418 L376.5,433 M23.5,438 L23.5,453 M50.5,437 L50.5,451 M86.5,438 L86.5,453 M118.5,438 L118.5,453 M149.5,438 L149.5,453 M163.5,438 L163.5,450 M177.5,438 L177.5,451 M187.5,438 L187.5,453 M205.5,437 L205.5,451 M219.5,439 L219.5,454 M248.5,440 L248.5,456 M288.5,438 L288.5,451 M312.5,441 L312.5,458 M334.5,442 L334.5,457 M347.5,442 L347.5,457 M358.5,439 L358.5,452 M374.5,440 L374.5,455 M21.5,457 L21.5,471 M34.5,458 L34.5,470 M61.5,460 L61.5,472 M90.5,458 L90.5,470 M127.5,461 L127.5,474 M141.5,461 L141.5,478 M181.5,461 L181.5,475 M206.5,459 L206.5,471 M243.5,463 L243.5,478 M268.5,462 L268.5,477 M280.5,460 L280.5,473 M313.5,462 L313.5,476 M338.5,462 L338.5,479 M364.5,462 L364.5,474 M48.5,481 L48.5,497 M62.5,479 L62.5,496 M96.5,481 L96.5,497 M126.5,481 L126.5,493 M152.5,481 L152.5,495 M173.5,482 L173.5,495 M203.5,481 L203.5,494 M238.5,484 L238.5,497 M271.5,482 L271.5,495 M297.5,483 L297.5,498 M330.5,482 L330.5,494 M365.5,485 L365.5,499" stroke="#4a3d33" stroke-width="1"/>
</g>
<polygon points="6.0,509.0 23.0,513.0 65.0,526.0 105.0,545.0 124.0,552.0 127.0,563.0 6.0,563.0" fill="url(#pbr)" />
<polygon points="561.7,370.0 586.0,363.5 603.0,341.0 620.0,329.4 646.0,324.0 678.0,320.0 742.0,316.6 806.0,314.5 859.0,311.0 900.0,308.0 943.0,307.0 960.0,320.0 960.0,390.0 806.0,390.0 700.0,395.0 600.0,380.0" fill="url(#ppu)" />
<polygon points="561.7,370.0 592.6,366.8 631.0,379.5 650.0,388.0 699.0,390.0 742.0,383.8 784.5,375.0 818.6,370.0 850.0,366.0 900.0,370.0 1000.0,375.0 1218.0,380.0 1223.0,395.0 1214.8,401.8 1210.7,408.3 1196.0,421.3 1179.8,431.0 1163.6,437.6 1140.8,453.8 1097.0,465.2 1079.0,475.0 1070.9,478.3 1051.2,490.4 1031.4,501.3 1011.7,511.2 985.4,523.2 954.8,529.8 926.3,521.0 900.0,512.3 875.0,496.0 845.6,482.3 826.0,466.8 820.0,463.8 810.5,472.6 787.0,480.4 758.0,483.3 728.7,476.5 699.5,465.8 680.0,458.0 656.6,437.0 635.0,420.0 614.0,409.4 592.6,396.6 571.0,381.7" fill="url(#pbl)" />
<polygon points="1079.0,467.0 1097.0,464.0 1097.0,468.0 1080.0,471.0" fill="#7f4e21" />
<clipPath id="cbl"><polygon points="561.7,370.0 592.6,366.8 631.0,379.5 650.0,388.0 699.0,390.0 742.0,383.8 784.5,375.0 818.6,370.0 850.0,366.0 900.0,370.0 1000.0,375.0 1218.0,380.0 1223.0,395.0 1214.8,401.8 1210.7,408.3 1196.0,421.3 1179.8,431.0 1163.6,437.6 1140.8,453.8 1097.0,465.2 1079.0,475.0 1070.9,478.3 1051.2,490.4 1031.4,501.3 1011.7,511.2 985.4,523.2 954.8,529.8 926.3,521.0 900.0,512.3 875.0,496.0 845.6,482.3 826.0,466.8 820.0,463.8 810.5,472.6 787.0,480.4 758.0,483.3 728.7,476.5 699.5,465.8 680.0,458.0 656.6,437.0 635.0,420.0 614.0,409.4 592.6,396.6 571.0,381.7" fill="#000" /></clipPath>
<path clip-path="url(#cbl)" d="M1028.5,523 L1028.5,536 M1027.5,510 L1027.5,525 M759.5,427 L759.5,441 M1052.5,427 L1052.5,434 M1022.5,457 L1022.5,465 M657.5,517 L657.5,533 M607.5,481 L607.5,494 M1195.5,420 L1195.5,435 M580.5,515 L580.5,522 M625.5,389 L625.5,398 M812.5,387 L812.5,400 M899.5,492 L899.5,507 M765.5,512 L765.5,521 M1220.5,455 L1220.5,468 M569.5,401 L569.5,414 M849.5,484 L849.5,498 M650.5,445 L650.5,456 M800.5,511 L800.5,521 M595.5,397 L595.5,412 M675.5,482 L675.5,489 M862.5,478 L862.5,485 M582.5,380 L582.5,389 M779.5,393 L779.5,406 M949.5,481 L949.5,493 M639.5,524 L639.5,540 M768.5,449 L768.5,460 M654.5,459 L654.5,470 M580.5,484 L580.5,491 M702.5,443 L702.5,450 M576.5,395 L576.5,408 M1063.5,425 L1063.5,441 M1137.5,428 L1137.5,441 M1086.5,428 L1086.5,436 M994.5,478 L994.5,485 M969.5,487 L969.5,496 M565.5,449 L565.5,464 M876.5,385 L876.5,394 M756.5,480 L756.5,495 M1155.5,405 L1155.5,411 M714.5,434 L714.5,447 M829.5,382 L829.5,397 M901.5,455 L901.5,467 M640.5,399 L640.5,406 M778.5,529 L778.5,545 M813.5,383 L813.5,398 M942.5,475 L942.5,490 M1029.5,412 L1029.5,427 M1060.5,527 L1060.5,535 M960.5,426 L960.5,442 M722.5,459 L722.5,468 M1190.5,443 L1190.5,452 M727.5,521 L727.5,530 M962.5,503 L962.5,518 M645.5,487 L645.5,493 M671.5,407 L671.5,413 M1089.5,445 L1089.5,454 M966.5,445 L966.5,457 M1175.5,505 L1175.5,515 M1097.5,424 L1097.5,431 M694.5,438 L694.5,451 M1137.5,398 L1137.5,408 M782.5,432 L782.5,438 M635.5,448 L635.5,460 M1021.5,443 L1021.5,449 M612.5,425 L612.5,435 M942.5,515 L942.5,530 M699.5,403 L699.5,414 M706.5,495 L706.5,506 M1099.5,529 L1099.5,537 M1169.5,388 L1169.5,394 M1051.5,471 L1051.5,481 M599.5,385 L599.5,400 M1216.5,399 L1216.5,412 M633.5,459 L633.5,470 M704.5,398 L704.5,405 M1028.5,519 L1028.5,530 M610.5,413 L610.5,424 M925.5,401 L925.5,417 M1049.5,399 L1049.5,411 M595.5,507 L595.5,522 M579.5,477 L579.5,489 M1161.5,383 L1161.5,398 M638.5,400 L638.5,407 M1219.5,409 L1219.5,419 M991.5,464 L991.5,476 M1159.5,497 L1159.5,510 M1038.5,518 L1038.5,525 M1096.5,511 L1096.5,517 M882.5,402 L882.5,415 M587.5,438 L587.5,445 M1074.5,504 L1074.5,514 M576.5,474 L576.5,484 M711.5,431 L711.5,445 M738.5,467 L738.5,483 M1017.5,507 L1017.5,516 M899.5,483 L899.5,499 M821.5,430 L821.5,446 M1006.5,431 L1006.5,440 M958.5,436 L958.5,451 M889.5,433 L889.5,441 M702.5,507 L702.5,518 M606.5,396 L606.5,406 M738.5,408 L738.5,421 M1047.5,450 L1047.5,459 M988.5,477 L988.5,493 M1097.5,506 L1097.5,522 M887.5,495 L887.5,506 M641.5,388 L641.5,398 M1187.5,390 L1187.5,406 M852.5,526 L852.5,537 M881.5,524 L881.5,530 M704.5,483 L704.5,496 M759.5,386 L759.5,396 M808.5,416 L808.5,422 M1209.5,409 L1209.5,422 M676.5,517 L676.5,533 M1220.5,474 L1220.5,481 M767.5,431 L767.5,444 M827.5,425 L827.5,431 M1048.5,516 L1048.5,522 M748.5,437 L748.5,447 M919.5,518 L919.5,532 M1077.5,420 L1077.5,432 M794.5,402 L794.5,414 M962.5,413 L962.5,426 M1029.5,430 L1029.5,446 M571.5,476 L571.5,490 M1147.5,508 L1147.5,519 M1039.5,463 L1039.5,479 M774.5,405 L774.5,421 M691.5,434 L691.5,443 M964.5,402 L964.5,412 M1114.5,462 L1114.5,472 M581.5,469 L581.5,483 M649.5,389 L649.5,402 M915.5,520 L915.5,532 M846.5,504 L846.5,510 M788.5,396 L788.5,408 M600.5,424 L600.5,438 M908.5,415 L908.5,428 M717.5,512 L717.5,526 M1015.5,506 L1015.5,521 M653.5,436 L653.5,449 M1104.5,523 L1104.5,533 M1140.5,422 L1140.5,436 M1091.5,523 L1091.5,533 M884.5,477 L884.5,492 M778.5,457 L778.5,465 M1122.5,514 L1122.5,524 M1151.5,507 L1151.5,516 M985.5,517 L985.5,524 M1080.5,381 L1080.5,396 M951.5,387 L951.5,401 M610.5,512 L610.5,524 M1122.5,524 L1122.5,531 M1067.5,403 L1067.5,411 M632.5,517 L632.5,530 M988.5,483 L988.5,493 M817.5,501 L817.5,514 M695.5,466 L695.5,478 M1052.5,514 L1052.5,525 M676.5,429 L676.5,441 M1197.5,387 L1197.5,397 M697.5,385 L697.5,391 M763.5,419 L763.5,428 M577.5,452 L577.5,463 M928.5,442 L928.5,457 M1075.5,406 L1075.5,419 M1161.5,411 L1161.5,425 M1203.5,444 L1203.5,453 M1108.5,491 L1108.5,497 M949.5,485 L949.5,499 M1195.5,420 L1195.5,434 M774.5,516 L774.5,532 M788.5,515 L788.5,524 M1120.5,530 L1120.5,538 M803.5,468 L803.5,476 M888.5,460 L888.5,469 M788.5,429 L788.5,436 M702.5,441 L702.5,449 M655.5,446 L655.5,458 M664.5,491 L664.5,503 M1121.5,412 L1121.5,421 M977.5,384 L977.5,391 M770.5,525 L770.5,541 M931.5,472 L931.5,479 M1082.5,467 L1082.5,481 M758.5,398 L758.5,411 M673.5,386 L673.5,392 M1129.5,511 L1129.5,526 M1057.5,417 L1057.5,426 M753.5,409 L753.5,418 M741.5,420 L741.5,430 M662.5,528 L662.5,534 M702.5,498 L702.5,505 M664.5,463 L664.5,475 M1043.5,489 L1043.5,503 M928.5,490 L928.5,499 M1180.5,475 L1180.5,481 M1214.5,390 L1214.5,399 M750.5,484 L750.5,497 M933.5,474 L933.5,486 M764.5,422 L764.5,429 M1089.5,383 L1089.5,394 M651.5,483 L651.5,498 M1178.5,428 L1178.5,442 M1163.5,467 L1163.5,477 M851.5,409 L851.5,417 M980.5,414 L980.5,425 M1116.5,474 L1116.5,486 M750.5,483 L750.5,492 M754.5,398 L754.5,409 M873.5,500 L873.5,507 M575.5,471 L575.5,487 M1203.5,392 L1203.5,401 M844.5,456 L844.5,467 M786.5,483 L786.5,498 M751.5,516 L751.5,523 M963.5,511 L963.5,524 M783.5,410 L783.5,422 M1153.5,385 L1153.5,392 M1195.5,407 L1195.5,416 M827.5,493 L827.5,505 M1081.5,392 L1081.5,401 M949.5,382 L949.5,389 M829.5,444 L829.5,454 M914.5,520 L914.5,534 M1085.5,486 L1085.5,500 M1146.5,405 L1146.5,421 M1020.5,399 L1020.5,413 M1176.5,391 L1176.5,403 M728.5,478 L728.5,491 M738.5,506 L738.5,520 M1190.5,394 L1190.5,406 M1071.5,487 L1071.5,497 M1104.5,482 L1104.5,497 M884.5,473 L884.5,487 M857.5,503 L857.5,519 M841.5,523 L841.5,533 M868.5,386 L868.5,392 M815.5,529 L815.5,535 M1213.5,420 L1213.5,432 M964.5,393 L964.5,404 M972.5,392 L972.5,407 M891.5,398 L891.5,407 M1004.5,502 L1004.5,512 M814.5,391 L814.5,405 M665.5,499 L665.5,507 M816.5,409 L816.5,415 M1204.5,486 L1204.5,499 M685.5,432 L685.5,438 M930.5,515 L930.5,523 M692.5,473 L692.5,486 M708.5,486 L708.5,499 M1180.5,447 L1180.5,463 M1161.5,487 L1161.5,498 M1108.5,415 L1108.5,425 M696.5,441 L696.5,454 M681.5,508 L681.5,518 M1084.5,471 L1084.5,481" stroke="#02223d" stroke-width="1"/>
<polygon points="809.0,362.0 813.0,356.0 850.0,340.0 886.0,327.0 952.0,310.0 975.0,315.0 1028.5,321.0 1072.0,335.0 1131.0,339.0 1200.0,344.0 1245.0,352.0 1243.0,362.8 1238.4,377.4 1223.7,384.0 1218.9,388.8 1186.0,387.0 1157.0,398.5 1113.0,406.7 1087.0,410.0 1087.0,414.0 1040.0,414.8 1014.0,417.4 926.0,414.5 882.0,408.6 850.0,398.0 818.0,375.0" fill="url(#por)" />
<polyline points="6.0,502.0 77.0,493.0 131.0,495.0 199.0,499.0 270.0,500.5 296.0,498.0 340.0,496.0 449.6,478.0 559.0,465.0 625.0,456.0 668.7,449.6 700.0,443.0" fill="none" stroke="#8f8f8f" stroke-width="3" stroke-linejoin="round"/>
<polyline points="353.0,445.0 405.8,454.0 493.5,460.5 559.0,462.7 603.0,459.5 668.7,447.4 700.0,444.0 728.7,449.2 758.0,450.8 797.0,448.3 820.0,441.4 845.6,437.5 875.0,436.6 880.0,436.5" fill="none" stroke="#8f8f8f" stroke-width="3" stroke-linejoin="round"/>
<polyline points="668.7,447.4 601.0,439.8 469.4,392.6 482.5,379.5 502.0,358.6 540.0,346.0 560.0,341.6 577.4,333.5 609.5,324.0 631.0,318.0 653.7,315.5 680.5,314.0 707.0,312.0 720.6,308.0 734.0,301.4 755.5,295.4" fill="none" stroke="#8f8f8f" stroke-width="3" stroke-linejoin="round"/>
<polyline points="502.0,358.6 540.0,350.0 560.0,344.0 577.0,338.0" fill="none" stroke="#8f8f8f" stroke-width="3" stroke-linejoin="round"/>
<polyline points="502.0,358.6 559.0,366.3 577.4,364.5" fill="none" stroke="#8f8f8f" stroke-width="3" stroke-linejoin="round"/>
<polyline points="480.0,380.6 506.6,372.9 559.0,366.3" fill="none" stroke="#8f8f8f" stroke-width="3" stroke-linejoin="round"/>
<polyline points="559.0,366.3 590.0,358.0 608.0,340.0 631.0,334.2" fill="none" stroke="#8f8f8f" stroke-width="3" stroke-linejoin="round"/>
<polyline points="41.0,364.5 102.0,362.5 117.0,355.4" fill="none" stroke="#8f8f8f" stroke-width="3" stroke-linejoin="round"/>
<polyline points="844.0,382.0 882.0,370.6 926.0,367.7 990.5,372.0" fill="none" stroke="#8f8f8f" stroke-width="3" stroke-linejoin="round"/>
<polyline points="862.0,404.0 897.0,408.6 915.0,410.0" fill="none" stroke="#8f8f8f" stroke-width="3" stroke-linejoin="round"/>
<polyline points="880,436.5 920,435.5 960,436 1000,434.5 1014,434" fill="none" stroke="#8f8f8f" stroke-width="3" stroke-dasharray="18,3,22,4,12,3,26,5,30"/>
<g opacity="1"><path d="M350.0,440.5 L348.5,402.5 C348.2,392.5 348.1,386.3 348.4,380.5 C348.6,374.7 348.6,372.2 350.0,367.5 C351.4,362.8 354.5,356.3 357.0,352.5 C359.5,348.7 362.0,346.5 365.0,344.5 C368.0,342.5 371.3,341.2 375.0,340.5 C378.7,339.8 383.5,339.7 387.0,340.0 C390.5,340.3 393.5,340.4 396.0,342.5 C398.5,344.6 400.7,348.8 402.0,352.5 C403.3,356.2 403.8,360.3 404.0,364.5 C404.2,368.7 404.2,372.8 403.0,377.5 C401.8,382.2 399.7,387.8 397.0,392.5 C394.3,397.2 392.0,400.5 387.0,405.5 C382.0,410.5 372.8,417.0 367.0,422.5 C361.2,428.0 354.8,435.5 352.0,438.5 L350.0,440.5 Z" fill="#b03a3a"/><path d="M348.2,439.9 L346.8,401.9 C346.5,391.9 346.4,385.7 346.6,379.9 C346.9,374.0 346.8,371.5 348.2,366.9 C349.7,362.2 352.8,355.7 355.2,351.9 C357.8,348.0 360.2,345.9 363.2,343.9 C366.2,341.9 369.6,340.6 373.2,339.9 C376.9,339.1 381.8,339.0 385.2,339.4 C388.8,339.7 391.8,339.8 394.2,341.9 C396.8,344.0 398.9,348.2 400.2,351.9 C401.6,355.5 402.1,359.7 402.2,363.9 C402.4,368.0 402.4,372.2 401.2,376.9 C400.1,381.5 397.9,387.2 395.2,391.9 C392.6,396.5 390.2,399.9 385.2,404.9 C380.2,409.9 371.1,416.4 365.2,421.9 C359.4,427.4 353.1,434.9 350.2,437.9 L348.2,439.9 Z" fill="#b03a3a"/><path d="M346.5,439.2 L345.0,401.2 C344.7,391.2 344.6,385.1 344.9,379.2 C345.1,373.4 345.1,370.9 346.5,366.2 C347.9,361.6 351.0,355.1 353.5,351.2 C356.0,347.4 358.5,345.2 361.5,343.2 C364.5,341.2 367.8,340.0 371.5,339.2 C375.2,338.5 380.0,338.4 383.5,338.8 C387.0,339.1 390.0,339.2 392.5,341.2 C395.0,343.3 397.2,347.6 398.5,351.2 C399.8,354.9 400.3,359.1 400.5,363.2 C400.7,367.4 400.7,371.6 399.5,376.2 C398.3,380.9 396.2,386.6 393.5,391.2 C390.8,395.9 388.5,399.2 383.5,404.2 C378.5,409.2 369.3,415.8 363.5,421.2 C357.7,426.8 351.3,434.2 348.5,437.2 L346.5,439.2 Z" fill="#b03a3a"/><path d="M344.8,438.6 L343.2,400.6 C343.0,390.6 342.9,384.5 343.1,378.6 C343.4,372.8 343.3,370.3 344.8,365.6 C346.2,361.0 349.2,354.5 351.8,350.6 C354.2,346.8 356.8,344.6 359.8,342.6 C362.8,340.6 366.1,339.4 369.8,338.6 C373.4,337.9 378.2,337.8 381.8,338.1 C385.2,338.5 388.2,338.5 390.8,340.6 C393.2,342.7 395.4,347.0 396.8,350.6 C398.1,354.3 398.6,358.5 398.8,362.6 C398.9,366.8 398.9,371.0 397.8,375.6 C396.6,380.3 394.4,386.0 391.8,390.6 C389.1,395.3 386.8,398.6 381.8,403.6 C376.8,408.6 367.6,415.1 361.8,420.6 C355.9,426.1 349.6,433.6 346.8,436.6 L344.8,438.6 Z" fill="#b03a3a"/><path d="M343.0,438.0 L341.5,400.0 C341.2,390.0 341.1,383.8 341.4,378.0 C341.6,372.2 341.6,369.7 343.0,365.0 C344.4,360.3 347.5,353.8 350.0,350.0 C352.5,346.2 355.0,344.0 358.0,342.0 C361.0,340.0 364.3,338.8 368.0,338.0 C371.7,337.2 376.5,337.2 380.0,337.5 C383.5,337.8 386.5,337.9 389.0,340.0 C391.5,342.1 393.7,346.3 395.0,350.0 C396.3,353.7 396.8,357.8 397.0,362.0 C397.2,366.2 397.2,370.3 396.0,375.0 C394.8,379.7 392.7,385.3 390.0,390.0 C387.3,394.7 385.0,398.0 380.0,403.0 C375.0,408.0 365.8,414.5 360.0,420.0 C354.2,425.5 347.8,433.0 345.0,436.0 L343.0,438.0 Z" fill="#7b3535"/><ellipse cx="370.0" cy="371.0" rx="10.5" ry="13.5" transform="rotate(25 370.0 371.0)" fill="#b03a3a"/><ellipse cx="373.0" cy="372.5" rx="7.0" ry="11.0" transform="rotate(30 373.0 372.5)" fill="#1e1e1e"/></g>
<g opacity="1"><path d="M759.4,297.9 L757.8,258.0 C757.5,247.5 757.4,241.1 757.7,234.9 C757.9,228.8 757.8,226.2 759.4,221.3 C760.9,216.4 764.1,209.6 766.7,205.5 C769.3,201.5 772.0,199.2 775.1,197.1 C778.2,195.0 781.8,193.7 785.6,192.9 C789.5,192.1 794.5,192.1 798.2,192.4 C801.9,192.8 805.0,192.8 807.6,195.0 C810.3,197.2 812.6,201.7 814.0,205.5 C815.4,209.4 815.9,213.8 816.1,218.1 C816.2,222.5 816.2,226.9 815.0,231.8 C813.8,236.7 811.5,242.6 808.7,247.5 C805.9,252.4 803.5,255.9 798.2,261.2 C793.0,266.4 783.3,273.3 777.2,279.0 C771.1,284.8 764.4,292.7 761.5,295.8 L759.4,297.9 Z" fill="#b03a3a"/><path d="M757.5,297.3 L755.9,257.4 C755.7,246.9 755.6,240.4 755.8,234.3 C756.1,228.1 756.0,225.5 757.5,220.6 C759.0,215.7 762.2,208.9 764.9,204.9 C767.5,200.8 770.1,198.6 773.3,196.5 C776.4,194.4 779.9,193.1 783.8,192.3 C787.6,191.5 792.7,191.4 796.4,191.7 C800.0,192.1 803.2,192.2 805.8,194.4 C808.4,196.6 810.7,201.0 812.1,204.9 C813.5,208.7 814.0,213.1 814.2,217.5 C814.4,221.8 814.4,226.2 813.2,231.1 C811.9,236.0 809.7,242.0 806.9,246.9 C804.1,251.8 801.6,255.3 796.4,260.5 C791.1,265.8 781.5,272.6 775.4,278.4 C769.2,284.1 762.6,292.0 759.6,295.2 L757.5,297.3 Z" fill="#b03a3a"/><path d="M755.7,296.6 L754.1,256.7 C753.8,246.2 753.7,239.7 754.0,233.6 C754.3,227.5 754.2,224.9 755.7,220.0 C757.2,215.1 760.4,208.2 763.0,204.2 C765.6,200.2 768.3,197.9 771.4,195.8 C774.6,193.7 778.1,192.4 781.9,191.6 C785.8,190.8 790.9,190.7 794.5,191.1 C798.2,191.4 801.3,191.5 804.0,193.7 C806.6,195.9 808.9,200.4 810.3,204.2 C811.7,208.1 812.2,212.4 812.4,216.8 C812.5,221.2 812.5,225.6 811.3,230.5 C810.1,235.4 807.8,241.3 805.0,246.2 C802.2,251.1 799.8,254.6 794.5,259.9 C789.3,265.1 779.6,271.9 773.5,277.7 C767.4,283.5 760.8,291.4 757.8,294.5 L755.7,296.6 Z" fill="#b03a3a"/><path d="M753.8,296.0 L752.3,256.1 C752.0,245.6 751.9,239.1 752.2,233.0 C752.4,226.8 752.3,224.2 753.8,219.3 C755.3,214.4 758.6,207.6 761.2,203.6 C763.8,199.5 766.4,197.3 769.6,195.2 C772.7,193.1 776.2,191.7 780.1,191.0 C783.9,190.2 789.0,190.1 792.7,190.4 C796.4,190.8 799.5,190.9 802.1,193.1 C804.8,195.2 807.0,199.7 808.4,203.6 C809.8,207.4 810.4,211.8 810.5,216.2 C810.7,220.5 810.7,224.9 809.5,229.8 C808.3,234.7 806.0,240.7 803.2,245.6 C800.4,250.5 797.9,254.0 792.7,259.2 C787.4,264.5 777.8,271.3 771.7,277.1 C765.6,282.8 758.9,290.7 755.9,293.9 L753.8,296.0 Z" fill="#b03a3a"/><path d="M752.0,295.3 L750.4,255.4 C750.1,244.9 750.1,238.4 750.3,232.3 C750.6,226.2 750.5,223.6 752.0,218.7 C753.5,213.8 756.7,206.9 759.4,202.9 C762.0,198.9 764.6,196.6 767.8,194.5 C770.9,192.4 774.4,191.1 778.2,190.3 C782.1,189.5 787.2,189.4 790.9,189.8 C794.5,190.1 797.7,190.2 800.3,192.4 C802.9,194.6 805.2,199.1 806.6,202.9 C808.0,206.8 808.5,211.1 808.7,215.5 C808.9,219.9 808.9,224.2 807.6,229.2 C806.4,234.1 804.1,240.0 801.4,244.9 C798.6,249.8 796.1,253.3 790.9,258.6 C785.6,263.8 776.0,270.6 769.9,276.4 C763.7,282.2 757.1,290.1 754.1,293.2 L752.0,295.3 Z" fill="#7b3535"/><ellipse cx="780.4" cy="224.9" rx="11.0" ry="14.2" transform="rotate(25 780.4 224.9)" fill="#b03a3a"/><ellipse cx="783.5" cy="226.5" rx="7.4" ry="11.6" transform="rotate(30 783.5 226.5)" fill="#1e1e1e"/></g>
<g opacity="1"><path d="M827.1,444.0 L825.5,404.1 C825.2,393.6 825.1,387.1 825.4,381.0 C825.6,374.9 825.5,372.3 827.1,367.4 C828.6,362.5 831.8,355.6 834.4,351.6 C837.0,347.6 839.7,345.3 842.8,343.2 C846.0,341.1 849.5,339.8 853.3,339.0 C857.2,338.2 862.2,338.1 865.9,338.5 C869.6,338.9 872.7,338.9 875.4,341.1 C878.0,343.3 880.3,347.8 881.7,351.6 C883.1,355.5 883.6,359.8 883.8,364.2 C883.9,368.6 883.9,373.0 882.7,377.9 C881.5,382.8 879.2,388.7 876.4,393.6 C873.6,398.5 871.2,402.0 865.9,407.3 C860.7,412.5 851.0,419.4 844.9,425.1 C838.8,430.9 832.1,438.8 829.2,441.9 L827.1,444.0 Z" fill="#2f7a35"/><path d="M825.2,443.4 L823.6,403.5 C823.4,393.0 823.3,386.5 823.5,380.4 C823.8,374.2 823.7,371.6 825.2,366.7 C826.7,361.8 829.9,355.0 832.6,351.0 C835.2,346.9 837.8,344.7 841.0,342.6 C844.1,340.5 847.6,339.2 851.5,338.4 C855.3,337.6 860.4,337.5 864.1,337.8 C867.7,338.2 870.9,338.3 873.5,340.5 C876.1,342.7 878.4,347.1 879.8,351.0 C881.2,354.8 881.7,359.2 881.9,363.6 C882.1,367.9 882.1,372.3 880.9,377.2 C879.6,382.1 877.4,388.1 874.6,393.0 C871.8,397.9 869.3,401.4 864.1,406.6 C858.8,411.9 849.2,418.7 843.1,424.5 C836.9,430.2 830.3,438.1 827.3,441.3 L825.2,443.4 Z" fill="#2f7a35"/><path d="M823.4,442.7 L821.8,402.8 C821.5,392.3 821.4,385.8 821.7,379.7 C822.0,373.6 821.9,371.0 823.4,366.1 C824.9,361.2 828.1,354.3 830.7,350.3 C833.4,346.3 836.0,344.0 839.1,341.9 C842.3,339.8 845.8,338.5 849.6,337.7 C853.5,336.9 858.6,336.8 862.2,337.2 C865.9,337.5 869.0,337.6 871.7,339.8 C874.3,342.0 876.6,346.5 878.0,350.3 C879.4,354.2 879.9,358.5 880.1,362.9 C880.2,367.3 880.2,371.7 879.0,376.6 C877.8,381.5 875.5,387.4 872.7,392.3 C869.9,397.2 867.5,400.7 862.2,406.0 C857.0,411.2 847.4,418.0 841.2,423.8 C835.1,429.6 828.5,437.5 825.5,440.6 L823.4,442.7 Z" fill="#2f7a35"/><path d="M821.5,442.1 L820.0,402.2 C819.7,391.7 819.6,385.2 819.9,379.1 C820.1,372.9 820.0,370.3 821.5,365.4 C823.0,360.5 826.3,353.7 828.9,349.7 C831.5,345.6 834.1,343.4 837.3,341.3 C840.4,339.2 843.9,337.8 847.8,337.1 C851.6,336.3 856.7,336.2 860.4,336.5 C864.1,336.9 867.2,337.0 869.8,339.2 C872.5,341.3 874.7,345.8 876.1,349.7 C877.5,353.5 878.1,357.9 878.2,362.3 C878.4,366.6 878.4,371.0 877.2,375.9 C876.0,380.8 873.7,386.8 870.9,391.7 C868.1,396.6 865.6,400.1 860.4,405.3 C855.1,410.6 845.5,417.4 839.4,423.2 C833.3,428.9 826.6,436.8 823.6,440.0 L821.5,442.1 Z" fill="#2f7a35"/><path d="M819.7,441.4 L818.1,401.5 C817.8,391.0 817.8,384.5 818.0,378.4 C818.3,372.3 818.2,369.6 819.7,364.8 C821.2,359.9 824.4,353.0 827.1,349.0 C829.7,345.0 832.3,342.7 835.5,340.6 C838.6,338.5 842.1,337.2 846.0,336.4 C849.8,335.6 854.9,335.5 858.6,335.9 C862.2,336.2 865.4,336.3 868.0,338.5 C870.6,340.7 872.9,345.1 874.3,349.0 C875.7,352.9 876.2,357.2 876.4,361.6 C876.6,366.0 876.6,370.4 875.4,375.2 C874.1,380.1 871.9,386.1 869.1,391.0 C866.3,395.9 863.8,399.4 858.6,404.6 C853.3,409.9 843.7,416.7 837.6,422.5 C831.4,428.3 824.8,436.1 821.8,439.3 L819.7,441.4 Z" fill="#365d3a"/><ellipse cx="848.1" cy="371.0" rx="11.0" ry="14.2" transform="rotate(25 848.1 371.0)" fill="#2f7a35"/><ellipse cx="851.2" cy="372.6" rx="7.4" ry="11.6" transform="rotate(30 851.2 372.6)" fill="#7f4e21"/></g>
<g opacity="1"><path d="M581.2,365.9 L580.5,346.9 C580.3,341.9 580.3,338.8 580.4,335.9 C580.5,332.9 580.5,331.7 581.2,329.4 C581.9,327.0 583.5,323.8 584.7,321.9 C586.0,319.9 587.2,318.9 588.7,317.9 C590.2,316.9 591.9,316.2 593.7,315.9 C595.5,315.5 598.0,315.4 599.7,315.6 C601.5,315.8 603.0,315.8 604.2,316.9 C605.5,317.9 606.5,320.0 607.2,321.9 C607.9,323.7 608.1,325.8 608.2,327.9 C608.3,329.9 608.3,332.0 607.7,334.4 C607.1,336.7 606.0,339.5 604.7,341.9 C603.4,344.2 602.2,345.9 599.7,348.4 C597.2,350.9 592.6,354.1 589.7,356.9 C586.8,359.6 583.6,363.4 582.2,364.9 L581.2,365.9 Z" fill="#c98a3c"/><path d="M580.3,365.5 L579.6,346.5 C579.4,341.5 579.4,338.5 579.5,335.5 C579.7,332.6 579.6,331.4 580.3,329.0 C581.0,326.7 582.6,323.5 583.8,321.5 C585.1,319.6 586.3,318.5 587.8,317.5 C589.3,316.5 591.0,315.9 592.8,315.5 C594.7,315.2 597.1,315.1 598.8,315.3 C600.6,315.5 602.1,315.5 603.3,316.5 C604.6,317.6 605.7,319.7 606.3,321.5 C607.0,323.4 607.2,325.5 607.3,327.5 C607.4,329.6 607.4,331.7 606.8,334.0 C606.2,336.4 605.2,339.2 603.8,341.5 C602.5,343.9 601.3,345.5 598.8,348.0 C596.3,350.5 591.7,353.8 588.8,356.5 C585.9,359.3 582.7,363.0 581.3,364.5 L580.3,365.5 Z" fill="#c98a3c"/><path d="M579.5,365.2 L578.7,346.2 C578.6,341.2 578.5,338.1 578.7,335.2 C578.8,332.3 578.7,331.1 579.5,328.7 C580.2,326.4 581.7,323.1 583.0,321.2 C584.2,319.3 585.5,318.2 587.0,317.2 C588.5,316.2 590.1,315.6 592.0,315.2 C593.8,314.9 596.2,314.8 598.0,315.0 C599.7,315.1 601.2,315.2 602.5,316.2 C603.7,317.3 604.8,319.4 605.5,321.2 C606.1,323.1 606.4,325.1 606.5,327.2 C606.5,329.3 606.5,331.4 606.0,333.7 C605.4,336.1 604.3,338.9 603.0,341.2 C601.6,343.6 600.5,345.2 598.0,347.7 C595.5,350.2 590.9,353.5 588.0,356.2 C585.0,359.0 581.9,362.7 580.5,364.2 L579.5,365.2 Z" fill="#c98a3c"/><path d="M578.6,364.9 L577.8,345.9 C577.7,340.9 577.7,337.8 577.8,334.9 C577.9,332.0 577.9,330.7 578.6,328.4 C579.3,326.1 580.8,322.8 582.1,320.9 C583.3,319.0 584.6,317.9 586.1,316.9 C587.6,315.9 589.2,315.3 591.1,314.9 C592.9,314.5 595.3,314.5 597.1,314.7 C598.8,314.8 600.3,314.9 601.6,315.9 C602.8,317.0 603.9,319.1 604.6,320.9 C605.2,322.7 605.5,324.8 605.6,326.9 C605.7,329.0 605.7,331.1 605.1,333.4 C604.5,335.7 603.4,338.6 602.1,340.9 C600.7,343.2 599.6,344.9 597.1,347.4 C594.6,349.9 590.0,353.2 587.1,355.9 C584.2,358.7 581.0,362.4 579.6,363.9 L578.6,364.9 Z" fill="#c98a3c"/><path d="M577.7,364.6 L577.0,345.6 C576.8,340.6 576.8,337.5 576.9,334.6 C577.0,331.7 577.0,330.4 577.7,328.1 C578.4,325.8 580.0,322.5 581.2,320.6 C582.5,318.7 583.7,317.6 585.2,316.6 C586.7,315.6 588.4,315.0 590.2,314.6 C592.0,314.2 594.5,314.2 596.2,314.4 C598.0,314.5 599.5,314.6 600.7,315.6 C602.0,316.6 603.0,318.8 603.7,320.6 C604.4,322.4 604.6,324.5 604.7,326.6 C604.8,328.7 604.8,330.8 604.2,333.1 C603.6,335.4 602.5,338.3 601.2,340.6 C599.9,342.9 598.7,344.6 596.2,347.1 C593.7,349.6 589.1,352.9 586.2,355.6 C583.3,358.4 580.1,362.1 578.7,363.6 L577.7,364.6 Z" fill="#8e6636"/><ellipse cx="591.2" cy="331.1" rx="5.2" ry="6.8" transform="rotate(25 591.2 331.1)" fill="#c98a3c"/><ellipse cx="592.7" cy="331.9" rx="3.5" ry="5.5" transform="rotate(30 592.7 331.9)" fill="#1e1e1e"/></g>
<g opacity="1"><path d="M635.1,336.5 L634.4,316.7 C634.2,311.5 634.2,308.3 634.3,305.3 C634.4,302.3 634.4,301.0 635.1,298.5 C635.9,296.1 637.5,292.7 638.8,290.7 C640.1,288.7 641.4,287.6 642.9,286.6 C644.5,285.5 646.2,284.9 648.1,284.5 C650.0,284.1 652.6,284.1 654.4,284.2 C656.2,284.4 657.8,284.5 659.1,285.5 C660.4,286.6 661.5,288.8 662.2,290.7 C662.9,292.6 663.1,294.8 663.2,297.0 C663.3,299.1 663.3,301.3 662.7,303.7 C662.1,306.2 661.0,309.1 659.6,311.5 C658.2,314.0 657.0,315.7 654.4,318.3 C651.8,320.9 647.0,324.3 644.0,327.1 C640.9,330.0 637.7,333.9 636.2,335.5 L635.1,336.5 Z" fill="#c98a3c"/><path d="M634.2,336.2 L633.5,316.4 C633.3,311.2 633.3,308.0 633.4,305.0 C633.5,301.9 633.5,300.6 634.2,298.2 C635.0,295.8 636.6,292.4 637.9,290.4 C639.2,288.4 640.5,287.3 642.0,286.3 C643.6,285.2 645.3,284.6 647.2,284.2 C649.1,283.8 651.7,283.7 653.5,283.9 C655.3,284.1 656.9,284.1 658.1,285.2 C659.4,286.3 660.6,288.5 661.3,290.4 C662.0,292.3 662.2,294.5 662.3,296.7 C662.4,298.8 662.4,301.0 661.8,303.4 C661.2,305.8 660.1,308.8 658.7,311.2 C657.3,313.6 656.1,315.4 653.5,318.0 C650.9,320.6 646.1,324.0 643.1,326.8 C640.0,329.7 636.7,333.6 635.3,335.1 L634.2,336.2 Z" fill="#c98a3c"/><path d="M633.3,335.8 L632.5,316.1 C632.4,310.9 632.4,307.7 632.5,304.6 C632.6,301.6 632.6,300.3 633.3,297.9 C634.1,295.5 635.7,292.1 637.0,290.1 C638.3,288.1 639.6,287.0 641.1,285.9 C642.7,284.9 644.4,284.2 646.3,283.8 C648.2,283.5 650.7,283.4 652.6,283.6 C654.4,283.8 655.9,283.8 657.2,284.9 C658.5,286.0 659.7,288.2 660.4,290.1 C661.1,292.0 661.3,294.2 661.4,296.3 C661.5,298.5 661.5,300.7 660.9,303.1 C660.3,305.5 659.1,308.5 657.8,310.9 C656.4,313.3 655.2,315.0 652.6,317.6 C650.0,320.2 645.2,323.6 642.2,326.5 C639.1,329.3 635.8,333.2 634.4,334.8 L633.3,335.8 Z" fill="#c98a3c"/><path d="M632.4,335.5 L631.6,315.8 C631.5,310.6 631.4,307.4 631.6,304.3 C631.7,301.3 631.7,300.0 632.4,297.6 C633.2,295.1 634.8,291.8 636.0,289.8 C637.3,287.8 638.6,286.6 640.2,285.6 C641.8,284.6 643.5,283.9 645.4,283.5 C647.3,283.1 649.8,283.1 651.6,283.3 C653.5,283.4 655.0,283.5 656.3,284.6 C657.6,285.6 658.8,287.9 659.4,289.8 C660.1,291.7 660.4,293.8 660.5,296.0 C660.6,298.2 660.6,300.3 660.0,302.8 C659.4,305.2 658.2,308.1 656.9,310.6 C655.5,313.0 654.2,314.7 651.6,317.3 C649.0,319.9 644.3,323.3 641.2,326.2 C638.2,329.0 634.9,332.9 633.4,334.5 L632.4,335.5 Z" fill="#c98a3c"/><path d="M631.5,335.2 L630.7,315.4 C630.6,310.2 630.5,307.0 630.7,304.0 C630.8,301.0 630.8,299.7 631.5,297.2 C632.2,294.8 633.8,291.4 635.1,289.4 C636.4,287.4 637.7,286.3 639.3,285.3 C640.9,284.2 642.6,283.6 644.5,283.2 C646.4,282.8 648.9,282.8 650.7,282.9 C652.6,283.1 654.1,283.2 655.4,284.2 C656.7,285.3 657.8,287.5 658.5,289.4 C659.2,291.3 659.5,293.5 659.6,295.7 C659.7,297.8 659.7,300.0 659.1,302.4 C658.5,304.9 657.3,307.8 655.9,310.2 C654.6,312.7 653.3,314.4 650.7,317.0 C648.1,319.6 643.4,323.0 640.3,325.8 C637.3,328.7 634.0,332.6 632.5,334.2 L631.5,335.2 Z" fill="#8e6636"/><ellipse cx="645.5" cy="300.4" rx="5.5" ry="7.0" transform="rotate(25 645.5 300.4)" fill="#c98a3c"/><ellipse cx="647.1" cy="301.1" rx="3.6" ry="5.7" transform="rotate(30 647.1 301.1)" fill="#1e1e1e"/></g>
<g opacity="0.95"><path d="M995.5,369.2 L994.8,350.2 C994.6,345.2 994.6,342.2 994.7,339.2 C994.8,336.3 994.8,335.1 995.5,332.8 C996.2,330.4 997.8,327.2 999.0,325.2 C1000.2,323.3 1001.5,322.2 1003.0,321.2 C1004.5,320.2 1006.2,319.6 1008.0,319.2 C1009.8,318.9 1012.2,318.8 1014.0,319.0 C1015.8,319.2 1017.2,319.2 1018.5,320.2 C1019.8,321.3 1020.8,323.4 1021.5,325.2 C1022.2,327.1 1022.4,329.2 1022.5,331.2 C1022.6,333.3 1022.6,335.4 1022.0,337.8 C1021.4,340.1 1020.3,342.9 1019.0,345.2 C1017.7,347.6 1016.5,349.2 1014.0,351.8 C1011.5,354.2 1006.9,357.5 1004.0,360.2 C1001.1,363.0 997.9,366.8 996.5,368.2 L995.5,369.2 Z" fill="#a08062"/><path d="M994.6,368.9 L993.9,349.9 C993.7,344.9 993.7,341.9 993.8,338.9 C994.0,336.0 993.9,334.8 994.6,332.4 C995.3,330.1 996.9,326.9 998.1,324.9 C999.4,323.0 1000.6,321.9 1002.1,320.9 C1003.6,319.9 1005.3,319.3 1007.1,318.9 C1009.0,318.6 1011.4,318.5 1013.1,318.7 C1014.9,318.9 1016.4,318.9 1017.6,319.9 C1018.9,321.0 1020.0,323.1 1020.6,324.9 C1021.3,326.8 1021.5,328.9 1021.6,330.9 C1021.7,333.0 1021.7,335.1 1021.1,337.4 C1020.5,339.8 1019.5,342.6 1018.1,344.9 C1016.8,347.3 1015.6,348.9 1013.1,351.4 C1010.6,353.9 1006.0,357.2 1003.1,359.9 C1000.2,362.7 997.0,366.4 995.6,367.9 L994.6,368.9 Z" fill="#a08062"/><path d="M993.8,368.6 L993.0,349.6 C992.9,344.6 992.8,341.5 993.0,338.6 C993.1,335.7 993.0,334.5 993.8,332.1 C994.5,329.8 996.0,326.5 997.2,324.6 C998.5,322.7 999.8,321.6 1001.2,320.6 C1002.8,319.6 1004.4,319.0 1006.2,318.6 C1008.1,318.2 1010.5,318.2 1012.2,318.4 C1014.0,318.5 1015.5,318.6 1016.8,319.6 C1018.0,320.7 1019.1,322.8 1019.8,324.6 C1020.4,326.5 1020.7,328.5 1020.8,330.6 C1020.8,332.7 1020.8,334.8 1020.2,337.1 C1019.7,339.5 1018.6,342.3 1017.2,344.6 C1015.9,347.0 1014.8,348.6 1012.2,351.1 C1009.8,353.6 1005.2,356.9 1002.2,359.6 C999.3,362.4 996.2,366.1 994.8,367.6 L993.8,368.6 Z" fill="#a08062"/><path d="M992.9,368.3 L992.1,349.3 C992.0,344.3 992.0,341.2 992.1,338.3 C992.2,335.4 992.2,334.1 992.9,331.8 C993.6,329.5 995.1,326.2 996.4,324.3 C997.6,322.4 998.9,321.3 1000.4,320.3 C1001.9,319.3 1003.5,318.7 1005.4,318.3 C1007.2,317.9 1009.6,317.9 1011.4,318.1 C1013.1,318.2 1014.6,318.3 1015.9,319.3 C1017.1,320.4 1018.2,322.5 1018.9,324.3 C1019.5,326.1 1019.8,328.2 1019.9,330.3 C1020.0,332.4 1020.0,334.5 1019.4,336.8 C1018.8,339.1 1017.7,342.0 1016.4,344.3 C1015.0,346.6 1013.9,348.3 1011.4,350.8 C1008.9,353.3 1004.3,356.6 1001.4,359.3 C998.5,362.1 995.3,365.8 993.9,367.3 L992.9,368.3 Z" fill="#a08062"/><path d="M992.0,368.0 L991.2,349.0 C991.1,344.0 991.1,340.9 991.2,338.0 C991.3,335.1 991.3,333.8 992.0,331.5 C992.7,329.2 994.2,325.9 995.5,324.0 C996.8,322.1 998.0,321.0 999.5,320.0 C1001.0,319.0 1002.7,318.4 1004.5,318.0 C1006.3,317.6 1008.8,317.6 1010.5,317.8 C1012.2,317.9 1013.8,318.0 1015.0,319.0 C1016.2,320.0 1017.3,322.2 1018.0,324.0 C1018.7,325.8 1018.9,327.9 1019.0,330.0 C1019.1,332.1 1019.1,334.2 1018.5,336.5 C1017.9,338.8 1016.8,341.7 1015.5,344.0 C1014.2,346.3 1013.0,348.0 1010.5,350.5 C1008.0,353.0 1003.4,356.2 1000.5,359.0 C997.6,361.8 994.4,365.5 993.0,367.0 L992.0,368.0 Z" fill="#7d6650" stroke="#9aa3ad" stroke-width="0.8"/><ellipse cx="1005.5" cy="334.5" rx="5.2" ry="6.8" transform="rotate(25 1005.5 334.5)" fill="#a08062"/><ellipse cx="1007.0" cy="335.2" rx="3.5" ry="5.5" transform="rotate(30 1007.0 335.2)" fill="#6a4220"/></g>
<g opacity="1"><path d="M-13.0,513.5 L-14.5,475.5 C-14.8,465.5 -14.9,459.3 -14.6,453.5 C-14.4,447.7 -14.4,445.2 -13.0,440.5 C-11.6,435.8 -8.5,429.3 -6.0,425.5 C-3.5,421.7 -1.0,419.5 2.0,417.5 C5.0,415.5 8.3,414.2 12.0,413.5 C15.7,412.8 20.5,412.7 24.0,413.0 C27.5,413.3 30.5,413.4 33.0,415.5 C35.5,417.6 37.7,421.8 39.0,425.5 C40.3,429.2 40.8,433.3 41.0,437.5 C41.2,441.7 41.2,445.8 40.0,450.5 C38.8,455.2 36.7,460.8 34.0,465.5 C31.3,470.2 29.0,473.5 24.0,478.5 C19.0,483.5 9.8,490.0 4.0,495.5 C-1.8,501.0 -8.2,508.5 -11.0,511.5 L-13.0,513.5 Z" fill="#b03a3a"/><path d="M-14.8,512.9 L-16.2,474.9 C-16.5,464.9 -16.6,458.7 -16.4,452.9 C-16.1,447.0 -16.2,444.5 -14.8,439.9 C-13.3,435.2 -10.2,428.7 -7.8,424.9 C-5.2,421.0 -2.8,418.9 0.2,416.9 C3.2,414.9 6.6,413.6 10.2,412.9 C13.9,412.1 18.8,412.0 22.2,412.4 C25.8,412.7 28.8,412.8 31.2,414.9 C33.8,417.0 35.9,421.2 37.2,424.9 C38.6,428.5 39.1,432.7 39.2,436.9 C39.4,441.0 39.4,445.2 38.2,449.9 C37.1,454.5 34.9,460.2 32.2,464.9 C29.6,469.5 27.2,472.9 22.2,477.9 C17.2,482.9 8.1,489.4 2.2,494.9 C-3.6,500.4 -9.9,507.9 -12.8,510.9 L-14.8,512.9 Z" fill="#b03a3a"/><path d="M-16.5,512.2 L-18.0,474.2 C-18.3,464.2 -18.4,458.1 -18.1,452.2 C-17.9,446.4 -17.9,443.9 -16.5,439.2 C-15.1,434.6 -12.0,428.1 -9.5,424.2 C-7.0,420.4 -4.5,418.2 -1.5,416.2 C1.5,414.2 4.8,413.0 8.5,412.2 C12.2,411.5 17.0,411.4 20.5,411.8 C24.0,412.1 27.0,412.2 29.5,414.2 C32.0,416.3 34.2,420.6 35.5,424.2 C36.8,427.9 37.3,432.1 37.5,436.2 C37.7,440.4 37.7,444.6 36.5,449.2 C35.3,453.9 33.2,459.6 30.5,464.2 C27.8,468.9 25.5,472.2 20.5,477.2 C15.5,482.2 6.3,488.8 0.5,494.2 C-5.3,499.8 -11.7,507.2 -14.5,510.2 L-16.5,512.2 Z" fill="#b03a3a"/><path d="M-18.2,511.6 L-19.8,473.6 C-20.0,463.6 -20.1,457.5 -19.9,451.6 C-19.6,445.8 -19.7,443.3 -18.2,438.6 C-16.8,434.0 -13.8,427.5 -11.2,423.6 C-8.8,419.8 -6.2,417.6 -3.2,415.6 C-0.2,413.6 3.1,412.4 6.8,411.6 C10.4,410.9 15.2,410.8 18.8,411.1 C22.2,411.5 25.2,411.5 27.8,413.6 C30.2,415.7 32.4,420.0 33.8,423.6 C35.1,427.3 35.6,431.5 35.8,435.6 C35.9,439.8 35.9,444.0 34.8,448.6 C33.6,453.3 31.4,459.0 28.8,463.6 C26.1,468.3 23.8,471.6 18.8,476.6 C13.8,481.6 4.6,488.1 -1.2,493.6 C-7.1,499.1 -13.4,506.6 -16.2,509.6 L-18.2,511.6 Z" fill="#b03a3a"/><path d="M-20.0,511.0 L-21.5,473.0 C-21.8,463.0 -21.9,456.8 -21.6,451.0 C-21.4,445.2 -21.4,442.7 -20.0,438.0 C-18.6,433.3 -15.5,426.8 -13.0,423.0 C-10.5,419.2 -8.0,417.0 -5.0,415.0 C-2.0,413.0 1.3,411.8 5.0,411.0 C8.7,410.2 13.5,410.2 17.0,410.5 C20.5,410.8 23.5,410.9 26.0,413.0 C28.5,415.1 30.7,419.3 32.0,423.0 C33.3,426.7 33.8,430.8 34.0,435.0 C34.2,439.2 34.2,443.3 33.0,448.0 C31.8,452.7 29.7,458.3 27.0,463.0 C24.3,467.7 22.0,471.0 17.0,476.0 C12.0,481.0 2.8,487.5 -3.0,493.0 C-8.8,498.5 -15.2,506.0 -18.0,509.0 L-20.0,511.0 Z" fill="#7b3535"/><ellipse cx="7.0" cy="444.0" rx="10.5" ry="13.5" transform="rotate(25 7.0 444.0)" fill="#b03a3a"/><ellipse cx="10.0" cy="445.5" rx="7.0" ry="11.0" transform="rotate(30 10.0 445.5)" fill="#5e4e40"/></g>
<ellipse cx="1001.5" cy="375" rx="8" ry="3" fill="#e8c62a"/><ellipse cx="1000" cy="371" rx="8" ry="3.5" fill="#3a5a9a"/>
<text x="347" y="330" font-family="Liberation Sans" font-weight="700" font-size="16" fill="#4a4a4a" stroke="#8e8e8e" stroke-width="1.3" letter-spacing="-0.1">North</text>
<text x="759" y="183" font-family="Liberation Sans" font-weight="700" font-size="16" fill="#4a4a4a" stroke="#8e8e8e" stroke-width="1.3" letter-spacing="-0.1">Mill 1</text>
<text x="828" y="329" font-family="Liberation Sans" font-weight="700" font-size="16" fill="#4a4a4a" stroke="#8e8e8e" stroke-width="1.3" letter-spacing="-0.1">Pit 2</text>
<text x="574" y="281" font-family="Liberation Sans" font-weight="700" font-size="16" fill="#4a4a4a" stroke="#8e8e8e" stroke-width="1.3" letter-spacing="-0.1">In-Pit Crusher 1 [C]</text>
<text x="520" y="311" font-family="Liberation Sans" font-weight="700" font-size="16" fill="#4a4a4a" stroke="#8e8e8e" stroke-width="1.3" letter-spacing="-0.1">In-Pit Crusher 1 [B]</text>
<text x="934" y="316" font-family="Liberation Sans" font-weight="700" font-size="16" fill="#4a4a4a" stroke="#8e8e8e" stroke-width="1.3" letter-spacing="-0.1">In-Pit Crusher 1 [A]</text>
<text x="2" y="405" font-family="Liberation Sans" font-weight="700" font-size="16" fill="#4a4a4a" stroke="#8e8e8e" stroke-width="1.3" letter-spacing="-0.1">uth</text>
<text x="1326" y="136.5" font-family="Liberation Sans" font-size="14" font-weight="700" fill="#22d9e6">Z</text>
<path d="M1329.5,137 L1329.5,150" stroke="#22d9e6" stroke-width="1"/>
<path d="M1329,150 L1337,150 M1334,148 L1341,148" stroke="#22dd22" stroke-width="1"/>
<path d="M1329,151 L1334,151 M1334,152 L1339,152" stroke="#ee1111" stroke-width="1"/>
<text x="1340" y="152" font-family="Liberation Sans" font-size="12" font-weight="700" fill="#22dd22">N</text>
<text x="1339" y="158" font-family="Liberation Sans" font-size="12" font-weight="700" fill="#ee1111">E</text>
</g></svg>
<svg class="a" style="left:0;top:0" width="1643" height="984">
<rect x="850.5" y="77" width="5.5" height="17" fill="#4e9a3a"/><path d="M844,79 L862.5,79 L853.2,61 Z" fill="#4e9a3a"/>
<circle cx="853" cy="113" r="18" fill="#fff" stroke="#4e9a3a" stroke-width="4.5"/><text x="853" y="121.5" text-anchor="middle" font-family="Liberation Sans" font-weight="700" font-size="23" fill="#4f4f4f">1</text>
<path d="M5,117 L5,136 L172,136 L172,117 L164,117 L164,129 L12.5,129 L12.5,117 Z" fill="#4e9a3a"/>
<rect x="80.5" y="135" width="5.5" height="17" fill="#4e9a3a"/>
<circle cx="83" cy="170" r="18" fill="#fff" stroke="#4e9a3a" stroke-width="4.5"/><text x="83" y="178.5" text-anchor="middle" font-family="Liberation Sans" font-weight="700" font-size="23" fill="#4f4f4f">5</text>
<rect x="218" y="639" width="19" height="6" fill="#4e9a3a"/><path d="M202,642 L220,633 L220,651 Z" fill="#4e9a3a"/>
<circle cx="255" cy="642" r="18" fill="#fff" stroke="#4e9a3a" stroke-width="4.5"/><text x="255" y="650.5" text-anchor="middle" font-family="Liberation Sans" font-weight="700" font-size="23" fill="#4f4f4f">2</text>
<rect x="226" y="707.5" width="19" height="6" fill="#4e9a3a"/><path d="M210,710.5 L228,701.5 L228,719.5 Z" fill="#4e9a3a"/>
<circle cx="264" cy="711" r="18" fill="#fff" stroke="#4e9a3a" stroke-width="4.5"/><text x="264" y="719.5" text-anchor="middle" font-family="Liberation Sans" font-weight="700" font-size="23" fill="#4f4f4f">3</text>
<rect x="211.5" y="761" width="5.5" height="16" fill="#4e9a3a"/><path d="M205.5,776 L223,776 L214.2,789.5 Z" fill="#4e9a3a"/>
<circle cx="214" cy="743" r="18" fill="#fff" stroke="#4e9a3a" stroke-width="4.5"/><text x="214" y="751.5" text-anchor="middle" font-family="Liberation Sans" font-weight="700" font-size="23" fill="#4f4f4f">4</text>
<rect x="1030" y="372" width="18" height="6" fill="#4e9a3a"/><path d="M1014,375 L1032,366 L1032,384 Z" fill="#4e9a3a"/>
<circle cx="1066.5" cy="375" r="18" fill="#fff" stroke="#4e9a3a" stroke-width="4.5"/><text x="1066.5" y="383.5" text-anchor="middle" font-family="Liberation Sans" font-weight="700" font-size="23" fill="#4f4f4f">6</text>
<rect x="752.5" y="617" width="6" height="18" fill="#4e9a3a"/><path d="M746,634 L764,634 L755.5,651 Z" fill="#4e9a3a"/>
<circle cx="755.5" cy="598" r="18" fill="#fff" stroke="#4e9a3a" stroke-width="4.5"/><text x="755.5" y="606.5" text-anchor="middle" font-family="Liberation Sans" font-weight="700" font-size="23" fill="#4f4f4f">7</text>
</svg>
</body></html>
